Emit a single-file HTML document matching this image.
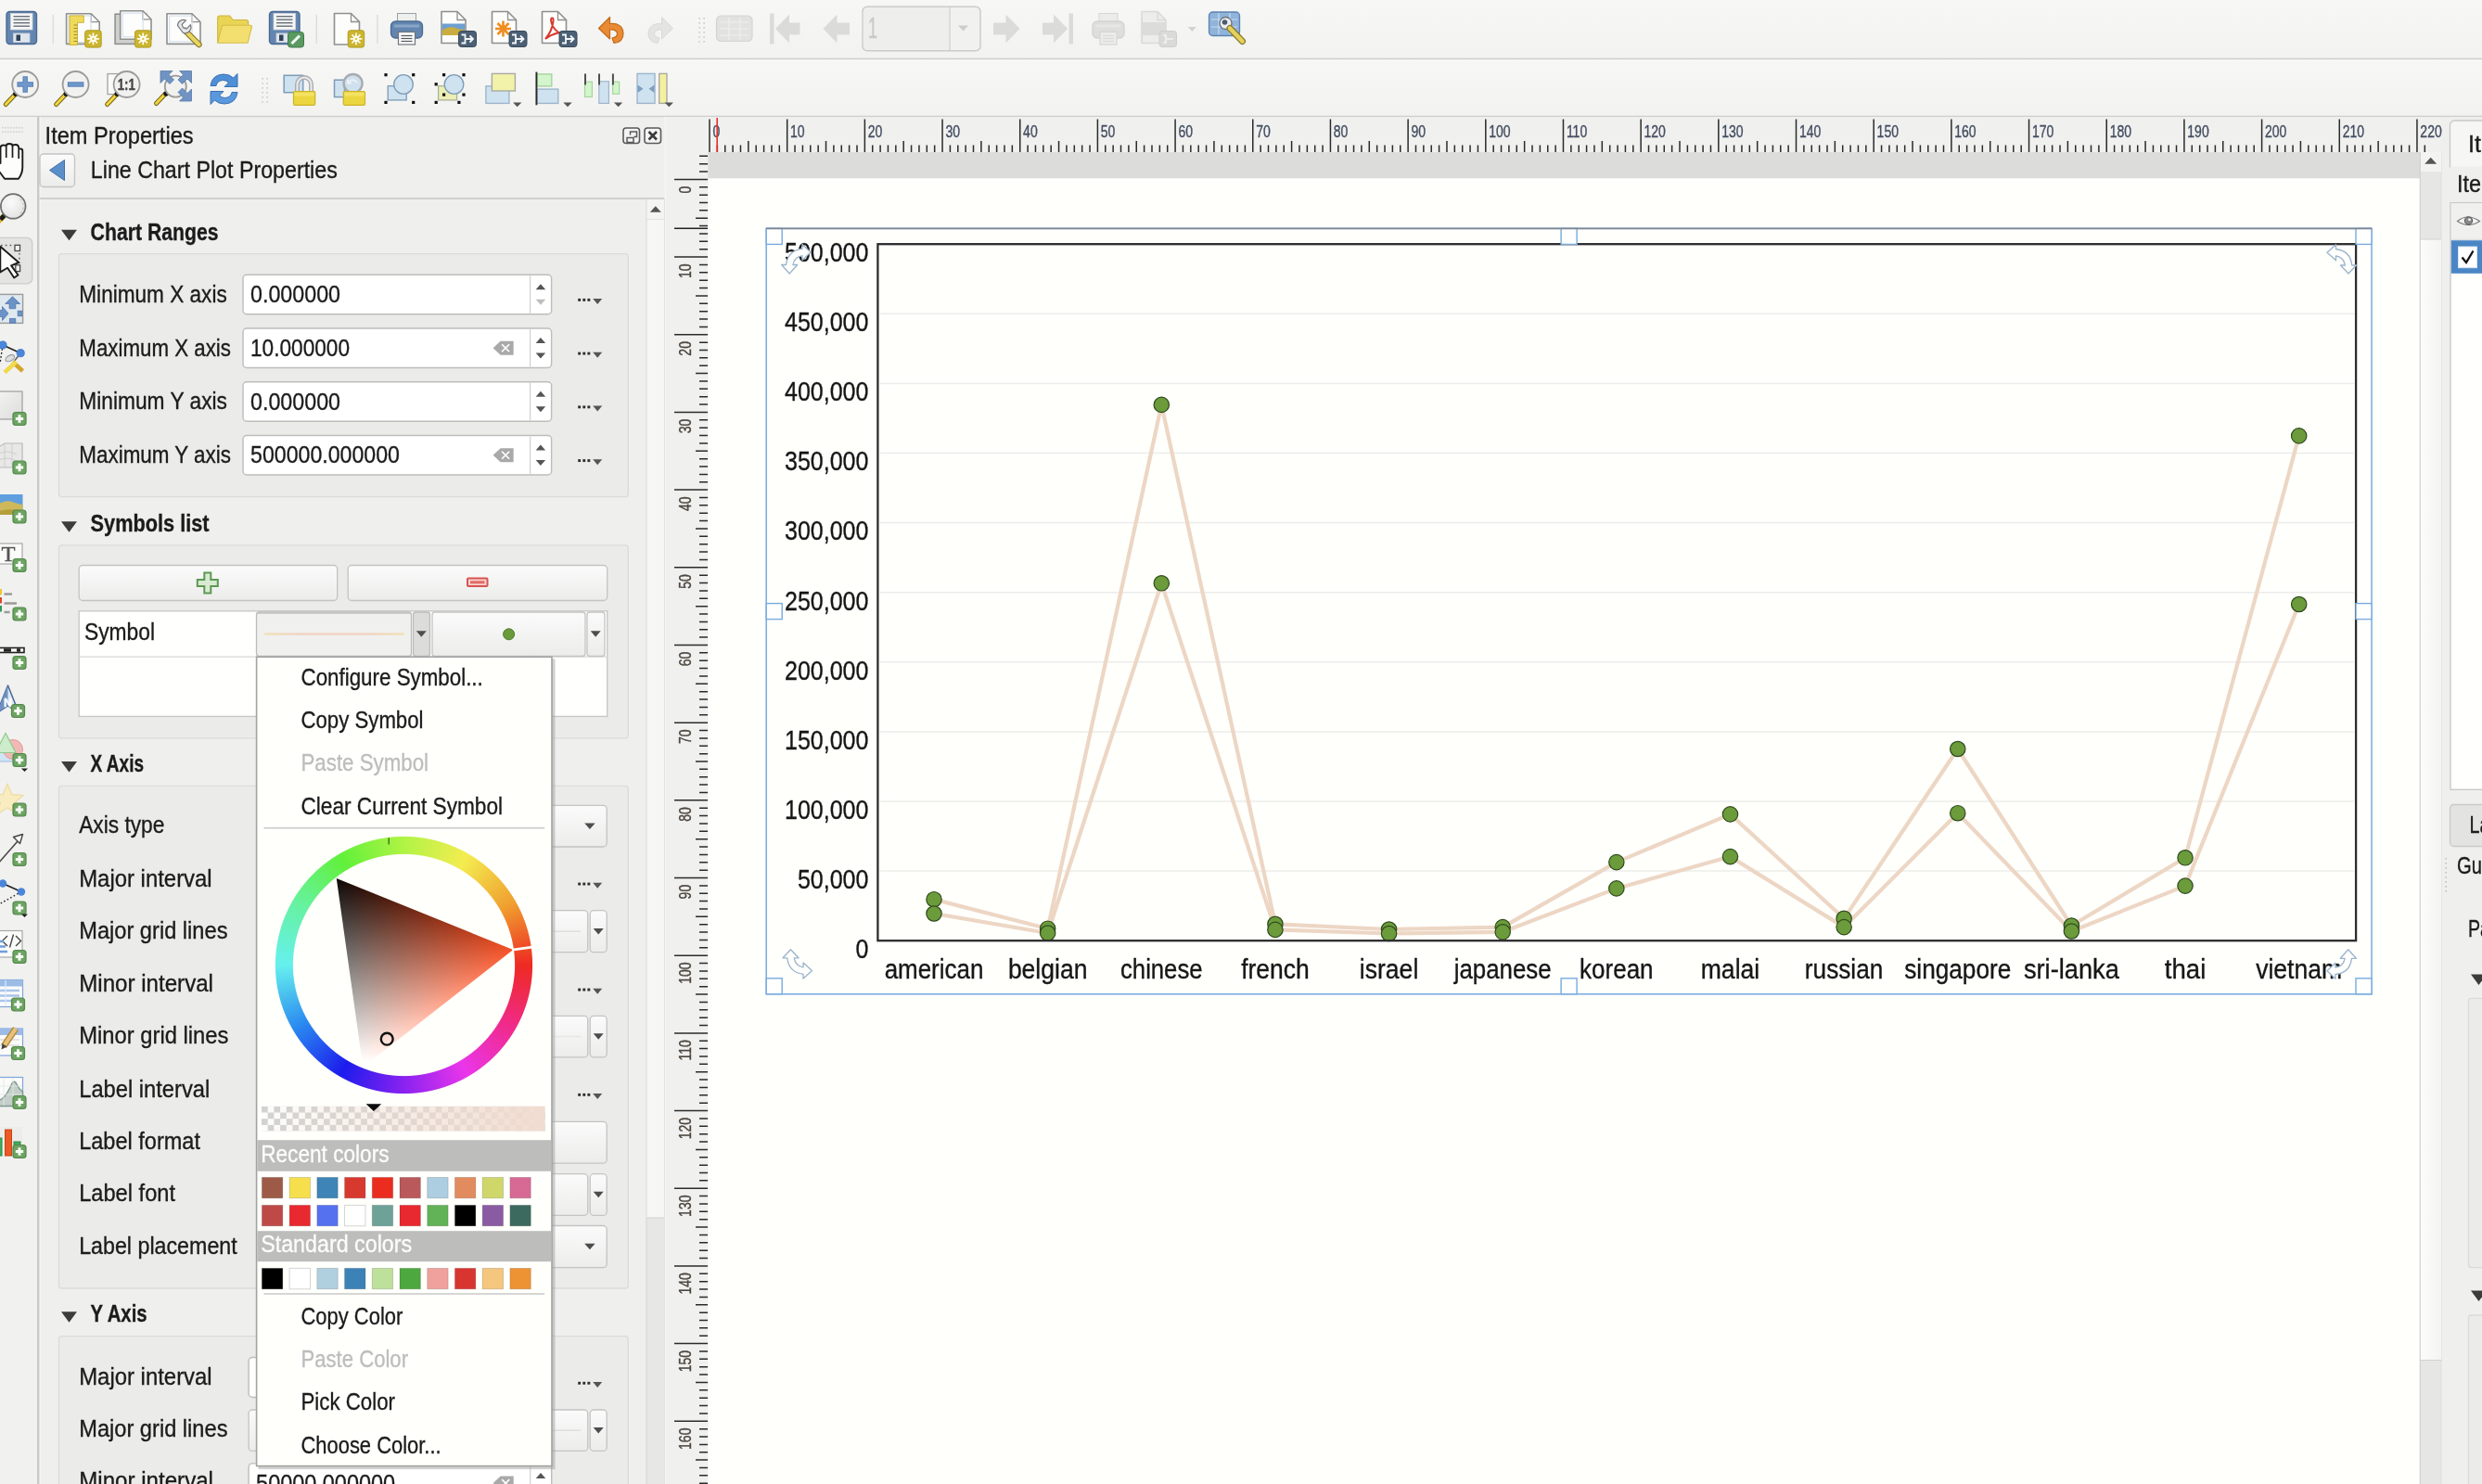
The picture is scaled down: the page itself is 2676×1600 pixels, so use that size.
<!DOCTYPE html>
<html><head><meta charset="utf-8"><title>QGIS Layout</title>
<style>
html,body{margin:0;padding:0;background:#efefee;overflow:hidden}
svg{display:block;font-family:"Liberation Sans",sans-serif;filter:blur(0.55px)}
text{stroke-width:0.35px;paint-order:stroke fill}
</style></head><body>
<svg width="2676" height="1600" viewBox="0 0 2676 1600"><defs><linearGradient id="tb" x1="0" y1="0" x2="0" y2="1"><stop offset="0" stop-color="#f7f7f6"/><stop offset="1" stop-color="#f2f2f1"/></linearGradient><linearGradient id="btn" x1="0" y1="0" x2="0" y2="1"><stop offset="0" stop-color="#fbfbfb"/><stop offset="1" stop-color="#ececeb"/></linearGradient><linearGradient id="lsym" x1="0" y1="0" x2="1" y2="0"><stop offset="0" stop-color="#efe3b4"/><stop offset="0.25" stop-color="#f2d2c2"/><stop offset="0.75" stop-color="#f2d2c2"/><stop offset="1" stop-color="#efe3b4"/></linearGradient><linearGradient id="sbh" x1="0" y1="0" x2="1" y2="0"><stop offset="0" stop-color="#fcfcfb"/><stop offset="1" stop-color="#f4f4f3"/></linearGradient><radialGradient id="lens" cx="0.4" cy="0.35" r="0.7"><stop offset="0" stop-color="#fafafa"/><stop offset="1" stop-color="#e2e2e1"/></radialGradient><linearGradient id="mapg" x1="0" y1="0" x2="1" y2="1"><stop offset="0" stop-color="#f4f4f3"/><stop offset="1" stop-color="#dcdcdb"/></linearGradient><linearGradient id="gh" gradientUnits="userSpaceOnUse" x1="553.25" y1="1023.99" x2="377.08" y2="1048.75"><stop offset="0" stop-color="#ea4a20"/><stop offset="1" stop-color="#ea4a20" stop-opacity="0"/></linearGradient><linearGradient id="gw" gradientUnits="userSpaceOnUse" x1="391.37" y1="1150.46" x2="458.01" y2="985.52"><stop offset="0" stop-color="#fff"/><stop offset="1" stop-color="#fff" stop-opacity="0"/></linearGradient><clipPath id="tric"><path d="M553.25 1023.99L362.78 947.04L391.37 1150.46z"/></clipPath><pattern id="chk" width="13.4" height="13.4" patternUnits="userSpaceOnUse" x="282" y="1192.8"><rect width="13.4" height="13.4" fill="#fdfdfb"/><rect width="6.7" height="6.7" fill="#d2d2d0"/><rect x="6.7" y="6.7" width="6.7" height="6.7" fill="#d2d2d0"/></pattern><linearGradient id="al" x1="0" y1="0" x2="1" y2="0"><stop offset="0" stop-color="#f1dcd0" stop-opacity="0"/><stop offset="1" stop-color="#f1dcd0" stop-opacity="1"/></linearGradient></defs><rect x="0" y="0" width="2676" height="1600" fill="#efefee"/><rect x="0" y="0" width="2676" height="63.5" fill="url(#tb)"/><rect x="0" y="63.5" width="2676" height="62.5" fill="url(#tb)"/><line x1="0" y1="63.5" x2="2676" y2="63.5" stroke="#cbcbca" stroke-width="1.5" /><line x1="0" y1="65" x2="2676" y2="65" stroke="#fafafa" stroke-width="1" /><line x1="0" y1="125.5" x2="2676" y2="125.5" stroke="#cfcfce" stroke-width="1.5" /><rect x="0" y="126" width="40" height="1474" fill="#f1f1f0"/><line x1="41.3" y1="126" x2="41.3" y2="1600" stroke="#c9c9c8" stroke-width="2.6" /><line x1="43.2" y1="126" x2="43.2" y2="1600" stroke="#f6f6f5" stroke-width="1" /><text x="48.6" y="155.2" font-size="26.67" fill="#1b1b1b" stroke="#1b1b1b" textLength="160" lengthAdjust="spacingAndGlyphs">Item Properties</text><rect x="672" y="138" width="17.5" height="16.5" fill="#f4f4f4" rx="3" stroke="#5a5a5a" stroke-width="1.6"/><rect x="695" y="138" width="17.5" height="16.5" fill="#f4f4f4" rx="3" stroke="#5a5a5a" stroke-width="1.6"/><path d="M676 148.5h7v5h-7zM679.5 145.5v-3.5h7v5.5h-3" fill="none" stroke="#5a5a5a" stroke-width="1.5"/><path d="M699.5 142l8.5 8.5M708 142l-8.5 8.5" fill="none" stroke="#3a3a3a" stroke-width="2.6"/><rect x="43" y="166" width="37.5" height="35.5" fill="url(#btn)" rx="4" stroke="#c4c4c3" stroke-width="1.3"/><path d="M53.5 183.5L69.5 172.5V194.5z" fill="#5b8fc9" stroke="#3f6fa8" stroke-width="1"/><text x="97.8" y="191.8" font-size="26.67" fill="#1b1b1b" stroke="#1b1b1b" textLength="266" lengthAdjust="spacingAndGlyphs">Line Chart Plot Properties</text><line x1="42.6" y1="214" x2="716" y2="214" stroke="#c6c6c5" stroke-width="1.4" /><rect x="697" y="215" width="19.5" height="1385" fill="#e7e7e6"/><line x1="697" y1="215" x2="697" y2="1600" stroke="#d4d4d3" stroke-width="1" /><rect x="697.5" y="236" width="18.5" height="1077" fill="#f6f6f5"/><line x1="697.5" y1="236" x2="716" y2="236" stroke="#d0d0cf" stroke-width="1" /><line x1="697.5" y1="1313" x2="716" y2="1313" stroke="#d0d0cf" stroke-width="1" /><rect x="697.5" y="215" width="18.5" height="21" fill="#f4f4f3"/><path d="M700.8 228.75h12l-6 -6.5z" fill="#555"/><line x1="716.5" y1="214" x2="716.5" y2="1600" stroke="#d4d4d3" stroke-width="1" /><path d="M66 247.8h17l-8.5 11.5z" fill="#3c3c3c"/><text x="97.6" y="258.8" font-size="26.67" fill="#1b1b1b" stroke="#1b1b1b" font-weight="bold" textLength="138" lengthAdjust="spacingAndGlyphs">Chart Ranges</text><rect x="63.5" y="273.6" width="613.8" height="262" fill="#ebebea" rx="3" stroke="#dbdbda" stroke-width="1.3"/><text x="85.3" y="325.8" font-size="26.67" fill="#1b1b1b" stroke="#1b1b1b" textLength="159.4" lengthAdjust="spacingAndGlyphs">Minimum X axis</text><rect x="262" y="296.3" width="332.6" height="42.4" fill="#ffffff" rx="4" stroke="#bdbdbc" stroke-width="1.4"/><line x1="571.6" y1="297.3" x2="571.6" y2="337.7" stroke="#d0d0cf" stroke-width="1.2" /><path d="M577.65 312.3h10.5l-5.25 -6z" fill="#555"/><path d="M577.65 322.7h10.5l-5.25 6z" fill="#bdbdbc"/><text x="270" y="326.1" font-size="26.67" fill="#1b1b1b" stroke="#1b1b1b" textLength="97" lengthAdjust="spacingAndGlyphs">0.000000</text><rect x="623.2" y="321.9" width="2.9" height="2.9" fill="#2f2f2f"/><rect x="628.3" y="321.9" width="2.9" height="2.9" fill="#2f2f2f"/><rect x="633.4" y="321.9" width="2.9" height="2.9" fill="#2f2f2f"/><path d="M639.2 322.1h10l-5 6z" fill="#555"/><text x="85.3" y="383.55" font-size="26.67" fill="#1b1b1b" stroke="#1b1b1b" textLength="163.7" lengthAdjust="spacingAndGlyphs">Maximum X axis</text><rect x="262" y="354.05" width="332.6" height="42.4" fill="#ffffff" rx="4" stroke="#bdbdbc" stroke-width="1.4"/><line x1="571.6" y1="355.05" x2="571.6" y2="395.45" stroke="#d0d0cf" stroke-width="1.2" /><path d="M577.65 370.05h10.5l-5.25 -6z" fill="#555"/><path d="M577.65 380.45h10.5l-5.25 6z" fill="#555"/><text x="270" y="383.85" font-size="26.67" fill="#1b1b1b" stroke="#1b1b1b" textLength="107" lengthAdjust="spacingAndGlyphs">10.000000</text><path d="M531.6 375.25l8 -7.5h14v15h-14z" fill="#a9a9a9"/><path d="M541.1 371.25l8 8M549.1 371.25l-8 8" fill="none" stroke="#ffffff" stroke-width="1.7"/><rect x="623.2" y="379.65" width="2.9" height="2.9" fill="#2f2f2f"/><rect x="628.3" y="379.65" width="2.9" height="2.9" fill="#2f2f2f"/><rect x="633.4" y="379.65" width="2.9" height="2.9" fill="#2f2f2f"/><path d="M639.2 379.85h10l-5 6z" fill="#555"/><text x="85.3" y="441.3" font-size="26.67" fill="#1b1b1b" stroke="#1b1b1b" textLength="159.7" lengthAdjust="spacingAndGlyphs">Minimum Y axis</text><rect x="262" y="411.8" width="332.6" height="42.4" fill="#ffffff" rx="4" stroke="#bdbdbc" stroke-width="1.4"/><line x1="571.6" y1="412.8" x2="571.6" y2="453.2" stroke="#d0d0cf" stroke-width="1.2" /><path d="M577.65 427.8h10.5l-5.25 -6z" fill="#555"/><path d="M577.65 438.2h10.5l-5.25 6z" fill="#555"/><text x="270" y="441.6" font-size="26.67" fill="#1b1b1b" stroke="#1b1b1b" textLength="97" lengthAdjust="spacingAndGlyphs">0.000000</text><rect x="623.2" y="437.4" width="2.9" height="2.9" fill="#2f2f2f"/><rect x="628.3" y="437.4" width="2.9" height="2.9" fill="#2f2f2f"/><rect x="633.4" y="437.4" width="2.9" height="2.9" fill="#2f2f2f"/><path d="M639.2 437.6h10l-5 6z" fill="#555"/><text x="85.3" y="499.05" font-size="26.67" fill="#1b1b1b" stroke="#1b1b1b" textLength="163.7" lengthAdjust="spacingAndGlyphs">Maximum Y axis</text><rect x="262" y="469.55" width="332.6" height="42.4" fill="#ffffff" rx="4" stroke="#bdbdbc" stroke-width="1.4"/><line x1="571.6" y1="470.55" x2="571.6" y2="510.95" stroke="#d0d0cf" stroke-width="1.2" /><path d="M577.65 485.55h10.5l-5.25 -6z" fill="#555"/><path d="M577.65 495.95h10.5l-5.25 6z" fill="#555"/><text x="270" y="499.35" font-size="26.67" fill="#1b1b1b" stroke="#1b1b1b" textLength="161" lengthAdjust="spacingAndGlyphs">500000.000000</text><path d="M531.6 490.75l8 -7.5h14v15h-14z" fill="#a9a9a9"/><path d="M541.1 486.75l8 8M549.1 486.75l-8 8" fill="none" stroke="#ffffff" stroke-width="1.7"/><rect x="623.2" y="495.15" width="2.9" height="2.9" fill="#2f2f2f"/><rect x="628.3" y="495.15" width="2.9" height="2.9" fill="#2f2f2f"/><rect x="633.4" y="495.15" width="2.9" height="2.9" fill="#2f2f2f"/><path d="M639.2 495.35h10l-5 6z" fill="#555"/><path d="M66 562.2h17l-8.5 11.5z" fill="#3c3c3c"/><text x="97.6" y="573.2" font-size="26.67" fill="#1b1b1b" stroke="#1b1b1b" font-weight="bold" textLength="128" lengthAdjust="spacingAndGlyphs">Symbols list</text><rect x="63.5" y="587.8" width="613.8" height="208" fill="#ebebea" rx="3" stroke="#dbdbda" stroke-width="1.3"/><rect x="85.2" y="609.5" width="278.5" height="38" fill="url(#btn)" rx="4" stroke="#c4c4c3" stroke-width="1.3"/><rect x="375.2" y="609.5" width="279.5" height="38" fill="url(#btn)" rx="4" stroke="#c4c4c3" stroke-width="1.3"/><path d="M220.3 617.5h7v7.5h7.5v7h-7.5v7.5h-7v-7.5h-7.5v-7h7.5z" fill="#d9ead3" stroke="#5c9a52" stroke-width="2"/><rect x="504" y="623.5" width="21.5" height="8.5" fill="#f7d4d2" rx="1" stroke="#d9534f" stroke-width="2"/><rect x="507" y="626.3" width="15.5" height="3" fill="#e06b66"/><rect x="85.2" y="658.8" width="569.5" height="113.6" fill="#fffffd" stroke="#c6c6c5" stroke-width="1.3"/><line x1="85.2" y1="708.2" x2="654.7" y2="708.2" stroke="#d9d9d8" stroke-width="1.2" /><text x="91" y="690.2" font-size="26.67" fill="#1b1b1b" stroke="#1b1b1b" textLength="76" lengthAdjust="spacingAndGlyphs">Symbol</text><rect x="276.5" y="660" width="167" height="47.5" fill="#f0f0ef" rx="3" stroke="#bcbcbb" stroke-width="1.3"/><line x1="277" y1="661" x2="443" y2="661" stroke="#c2c2c1" stroke-width="1.6" /><rect x="445.5" y="660" width="18" height="47.5" fill="#dcdcdb" rx="3" stroke="#bcbcbb" stroke-width="1.3"/><rect x="285" y="682.4" width="151" height="2.4" fill="url(#lsym)"/><path d="M448.8 680.25h11l-5.5 6.5z" fill="#4d4d4d"/><rect x="466" y="660" width="165" height="47.5" fill="url(#btn)" rx="3" stroke="#c4c4c3" stroke-width="1.3"/><rect x="633" y="660" width="19" height="47.5" fill="url(#btn)" rx="3" stroke="#c4c4c3" stroke-width="1.3"/><circle cx="548.6" cy="683.8" r="6" fill="#6a9a3a" stroke="#4d7a2a" stroke-width="1"/><path d="M636.7 680.25h11l-5.5 6.5z" fill="#4d4d4d"/><path d="M66 821h17l-8.5 11.5z" fill="#3c3c3c"/><text x="97.6" y="832" font-size="26.67" fill="#1b1b1b" stroke="#1b1b1b" font-weight="bold" textLength="57.5" lengthAdjust="spacingAndGlyphs">X Axis</text><rect x="63.5" y="847.3" width="613.8" height="541.7" fill="#ebebea" rx="3" stroke="#dbdbda" stroke-width="1.3"/><text x="85.2" y="897.8" font-size="26.67" fill="#1b1b1b" stroke="#1b1b1b" textLength="92.1" lengthAdjust="spacingAndGlyphs">Axis type</text><text x="85.2" y="955.5" font-size="26.67" fill="#1b1b1b" stroke="#1b1b1b" textLength="143.5" lengthAdjust="spacingAndGlyphs">Major interval</text><text x="85.2" y="1011.9" font-size="26.67" fill="#1b1b1b" stroke="#1b1b1b" textLength="160.3" lengthAdjust="spacingAndGlyphs">Major grid lines</text><text x="85.2" y="1069.2" font-size="26.67" fill="#1b1b1b" stroke="#1b1b1b" textLength="144.8" lengthAdjust="spacingAndGlyphs">Minor interval</text><text x="85.2" y="1125" font-size="26.67" fill="#1b1b1b" stroke="#1b1b1b" textLength="161.2" lengthAdjust="spacingAndGlyphs">Minor grid lines</text><text x="85.2" y="1183" font-size="26.67" fill="#1b1b1b" stroke="#1b1b1b" textLength="141.1" lengthAdjust="spacingAndGlyphs">Label interval</text><text x="85.2" y="1238.8" font-size="26.67" fill="#1b1b1b" stroke="#1b1b1b" textLength="130.8" lengthAdjust="spacingAndGlyphs">Label format</text><text x="85.2" y="1294.9" font-size="26.67" fill="#1b1b1b" stroke="#1b1b1b" textLength="103.8" lengthAdjust="spacingAndGlyphs">Label font</text><text x="85.2" y="1351.5" font-size="26.67" fill="#1b1b1b" stroke="#1b1b1b" textLength="170.5" lengthAdjust="spacingAndGlyphs">Label placement</text><rect x="278.5" y="868.3" width="375.7" height="44.7" fill="url(#btn)" rx="4" stroke="#c4c4c3" stroke-width="1.3"/><path d="M630.15 887.4h11.5l-5.75 6.5z" fill="#4d4d4d"/><rect x="623.2" y="951.6" width="2.9" height="2.9" fill="#2f2f2f"/><rect x="628.3" y="951.6" width="2.9" height="2.9" fill="#2f2f2f"/><rect x="633.4" y="951.6" width="2.9" height="2.9" fill="#2f2f2f"/><path d="M639.2 951.8h10l-5 6z" fill="#555"/><rect x="278.5" y="981.7" width="355.2" height="45" fill="url(#btn)" rx="4" stroke="#c4c4c3" stroke-width="1.3"/><rect x="636.2" y="981.7" width="18" height="45" fill="url(#btn)" rx="4" stroke="#c4c4c3" stroke-width="1.3"/><path d="M639.7 1000.95h11l-5.5 6.5z" fill="#4d4d4d"/><line x1="286.5" y1="1004.2" x2="626.2" y2="1004.2" stroke="#dededd" stroke-width="1.5" /><rect x="623.2" y="1065.6" width="2.9" height="2.9" fill="#2f2f2f"/><rect x="628.3" y="1065.6" width="2.9" height="2.9" fill="#2f2f2f"/><rect x="633.4" y="1065.6" width="2.9" height="2.9" fill="#2f2f2f"/><path d="M639.2 1065.8h10l-5 6z" fill="#555"/><rect x="278.5" y="1095.3" width="355.2" height="44.6" fill="url(#btn)" rx="4" stroke="#c4c4c3" stroke-width="1.3"/><rect x="636.2" y="1095.3" width="18" height="44.6" fill="url(#btn)" rx="4" stroke="#c4c4c3" stroke-width="1.3"/><path d="M639.7 1114.35h11l-5.5 6.5z" fill="#4d4d4d"/><line x1="286.5" y1="1117.6" x2="626.2" y2="1117.6" stroke="#e6e6e5" stroke-width="1.5" /><rect x="623.2" y="1178.9" width="2.9" height="2.9" fill="#2f2f2f"/><rect x="628.3" y="1178.9" width="2.9" height="2.9" fill="#2f2f2f"/><rect x="633.4" y="1178.9" width="2.9" height="2.9" fill="#2f2f2f"/><path d="M639.2 1179.1h10l-5 6z" fill="#555"/><rect x="278.5" y="1209.4" width="375.7" height="44.8" fill="url(#btn)" rx="4" stroke="#c4c4c3" stroke-width="1.3"/><rect x="278.5" y="1265.7" width="355.2" height="44.7" fill="url(#btn)" rx="4" stroke="#c4c4c3" stroke-width="1.3"/><rect x="636.2" y="1265.7" width="18" height="44.7" fill="url(#btn)" rx="4" stroke="#c4c4c3" stroke-width="1.3"/><path d="M639.7 1284.8h11l-5.5 6.5z" fill="#4d4d4d"/><rect x="278.5" y="1321.5" width="375.7" height="45.2" fill="url(#btn)" rx="4" stroke="#c4c4c3" stroke-width="1.3"/><path d="M630.15 1340.85h11.5l-5.75 6.5z" fill="#4d4d4d"/><path d="M66 1414.2h17l-8.5 11.5z" fill="#3c3c3c"/><text x="97.6" y="1425.2" font-size="26.67" fill="#1b1b1b" stroke="#1b1b1b" font-weight="bold" textLength="61" lengthAdjust="spacingAndGlyphs">Y Axis</text><rect x="63.5" y="1440.6" width="613.8" height="169.4" fill="#ebebea" rx="3" stroke="#dbdbda" stroke-width="1.3"/><text x="85.2" y="1493" font-size="26.67" fill="#1b1b1b" stroke="#1b1b1b" textLength="143.5" lengthAdjust="spacingAndGlyphs">Major interval</text><text x="85.2" y="1549" font-size="26.67" fill="#1b1b1b" stroke="#1b1b1b" textLength="160.3" lengthAdjust="spacingAndGlyphs">Major grid lines</text><text x="85.2" y="1604.5" font-size="26.67" fill="#1b1b1b" stroke="#1b1b1b" textLength="144.8" lengthAdjust="spacingAndGlyphs">Minor interval</text><rect x="268.1" y="1463.5" width="326" height="43" fill="#fff" rx="4" stroke="#bdbdbc" stroke-width="1.4"/><rect x="623.2" y="1489.8" width="2.9" height="2.9" fill="#2f2f2f"/><rect x="628.3" y="1489.8" width="2.9" height="2.9" fill="#2f2f2f"/><rect x="633.4" y="1489.8" width="2.9" height="2.9" fill="#2f2f2f"/><path d="M639.2 1490h10l-5 6z" fill="#555"/><rect x="268.1" y="1520" width="365.6" height="44.4" fill="url(#btn)" rx="4" stroke="#c4c4c3" stroke-width="1.3"/><rect x="636.2" y="1520" width="18" height="44.4" fill="url(#btn)" rx="4" stroke="#c4c4c3" stroke-width="1.3"/><path d="M639.7 1538.95h11l-5.5 6.5z" fill="#4d4d4d"/><line x1="276.1" y1="1542.2" x2="626.2" y2="1542.2" stroke="#dededd" stroke-width="1.5" /><rect x="268.1" y="1577.9" width="326.6" height="42.4" fill="#ffffff" rx="4" stroke="#bdbdbc" stroke-width="1.4"/><line x1="571.7" y1="1578.9" x2="571.7" y2="1619.3" stroke="#d0d0cf" stroke-width="1.2" /><path d="M577.75 1593.9h10.5l-5.25 -6z" fill="#555"/><path d="M577.75 1604.3h10.5l-5.25 6z" fill="#555"/><text x="276.1" y="1607.7" font-size="26.67" fill="#1b1b1b" stroke="#1b1b1b" textLength="150" lengthAdjust="spacingAndGlyphs">50000.000000</text><path d="M531.7 1599.1l8 -7.5h14v15h-14z" fill="#a9a9a9"/><path d="M541.2 1595.1l8 8M549.2 1595.1l-8 8" fill="none" stroke="#ffffff" stroke-width="1.7"/><rect x="717" y="126.3" width="1915" height="38" fill="#f0f0ef"/><rect x="717" y="126.3" width="46.3" height="1474" fill="#f0f0ef"/><line x1="717.3" y1="126" x2="717.3" y2="1600" stroke="#f6f6f5" stroke-width="1.5" /><path d="M765 128.4V164M773.37 156.5V164M781.74 156.5V164M790.1 156.5V164M798.47 156.5V164M806.84 152V164M815.21 156.5V164M823.58 156.5V164M831.94 156.5V164M840.31 156.5V164M848.68 128.4V164M857.05 156.5V164M865.42 156.5V164M873.78 156.5V164M882.15 156.5V164M890.52 152V164M898.89 156.5V164M907.26 156.5V164M915.62 156.5V164M923.99 156.5V164M932.36 128.4V164M940.73 156.5V164M949.1 156.5V164M957.46 156.5V164M965.83 156.5V164M974.2 152V164M982.57 156.5V164M990.94 156.5V164M999.3 156.5V164M1007.67 156.5V164M1016.04 128.4V164M1024.41 156.5V164M1032.78 156.5V164M1041.14 156.5V164M1049.51 156.5V164M1057.88 152V164M1066.25 156.5V164M1074.62 156.5V164M1082.98 156.5V164M1091.35 156.5V164M1099.72 128.4V164M1108.09 156.5V164M1116.46 156.5V164M1124.82 156.5V164M1133.19 156.5V164M1141.56 152V164M1149.93 156.5V164M1158.3 156.5V164M1166.66 156.5V164M1175.03 156.5V164M1183.4 128.4V164M1191.77 156.5V164M1200.14 156.5V164M1208.5 156.5V164M1216.87 156.5V164M1225.24 152V164M1233.61 156.5V164M1241.98 156.5V164M1250.34 156.5V164M1258.71 156.5V164M1267.08 128.4V164M1275.45 156.5V164M1283.82 156.5V164M1292.18 156.5V164M1300.55 156.5V164M1308.92 152V164M1317.29 156.5V164M1325.66 156.5V164M1334.02 156.5V164M1342.39 156.5V164M1350.76 128.4V164M1359.13 156.5V164M1367.5 156.5V164M1375.86 156.5V164M1384.23 156.5V164M1392.6 152V164M1400.97 156.5V164M1409.34 156.5V164M1417.7 156.5V164M1426.07 156.5V164M1434.44 128.4V164M1442.81 156.5V164M1451.18 156.5V164M1459.54 156.5V164M1467.91 156.5V164M1476.28 152V164M1484.65 156.5V164M1493.02 156.5V164M1501.38 156.5V164M1509.75 156.5V164M1518.12 128.4V164M1526.49 156.5V164M1534.86 156.5V164M1543.22 156.5V164M1551.59 156.5V164M1559.96 152V164M1568.33 156.5V164M1576.7 156.5V164M1585.06 156.5V164M1593.43 156.5V164M1601.8 128.4V164M1610.17 156.5V164M1618.54 156.5V164M1626.9 156.5V164M1635.27 156.5V164M1643.64 152V164M1652.01 156.5V164M1660.38 156.5V164M1668.74 156.5V164M1677.11 156.5V164M1685.48 128.4V164M1693.85 156.5V164M1702.22 156.5V164M1710.58 156.5V164M1718.95 156.5V164M1727.32 152V164M1735.69 156.5V164M1744.06 156.5V164M1752.42 156.5V164M1760.79 156.5V164M1769.16 128.4V164M1777.53 156.5V164M1785.9 156.5V164M1794.26 156.5V164M1802.63 156.5V164M1811 152V164M1819.37 156.5V164M1827.74 156.5V164M1836.1 156.5V164M1844.47 156.5V164M1852.84 128.4V164M1861.21 156.5V164M1869.58 156.5V164M1877.94 156.5V164M1886.31 156.5V164M1894.68 152V164M1903.05 156.5V164M1911.42 156.5V164M1919.78 156.5V164M1928.15 156.5V164M1936.52 128.4V164M1944.89 156.5V164M1953.26 156.5V164M1961.62 156.5V164M1969.99 156.5V164M1978.36 152V164M1986.73 156.5V164M1995.1 156.5V164M2003.46 156.5V164M2011.83 156.5V164M2020.2 128.4V164M2028.57 156.5V164M2036.94 156.5V164M2045.3 156.5V164M2053.67 156.5V164M2062.04 152V164M2070.41 156.5V164M2078.78 156.5V164M2087.14 156.5V164M2095.51 156.5V164M2103.88 128.4V164M2112.25 156.5V164M2120.62 156.5V164M2128.98 156.5V164M2137.35 156.5V164M2145.72 152V164M2154.09 156.5V164M2162.46 156.5V164M2170.82 156.5V164M2179.19 156.5V164M2187.56 128.4V164M2195.93 156.5V164M2204.3 156.5V164M2212.66 156.5V164M2221.03 156.5V164M2229.4 152V164M2237.77 156.5V164M2246.14 156.5V164M2254.5 156.5V164M2262.87 156.5V164M2271.24 128.4V164M2279.61 156.5V164M2287.98 156.5V164M2296.34 156.5V164M2304.71 156.5V164M2313.08 152V164M2321.45 156.5V164M2329.82 156.5V164M2338.18 156.5V164M2346.55 156.5V164M2354.92 128.4V164M2363.29 156.5V164M2371.66 156.5V164M2380.02 156.5V164M2388.39 156.5V164M2396.76 152V164M2405.13 156.5V164M2413.5 156.5V164M2421.86 156.5V164M2430.23 156.5V164M2438.6 128.4V164M2446.97 156.5V164M2455.34 156.5V164M2463.7 156.5V164M2472.07 156.5V164M2480.44 152V164M2488.81 156.5V164M2497.18 156.5V164M2505.54 156.5V164M2513.91 156.5V164M2522.28 128.4V164M2530.65 156.5V164M2539.02 156.5V164M2547.38 156.5V164M2555.75 156.5V164M2564.12 152V164M2572.49 156.5V164M2580.86 156.5V164M2589.22 156.5V164M2597.59 156.5V164M2605.96 128.4V164M2614.33 156.5V164" fill="none" stroke="#2b2b2b" stroke-width="1.5"/><text x="768.4" y="147.7" font-size="17.5" fill="#434d60" stroke="#434d60" textLength="7.79" lengthAdjust="spacingAndGlyphs">0</text><text x="852.08" y="147.7" font-size="17.5" fill="#434d60" stroke="#434d60" textLength="15.57" lengthAdjust="spacingAndGlyphs">10</text><text x="935.76" y="147.7" font-size="17.5" fill="#434d60" stroke="#434d60" textLength="15.57" lengthAdjust="spacingAndGlyphs">20</text><text x="1019.44" y="147.7" font-size="17.5" fill="#434d60" stroke="#434d60" textLength="15.57" lengthAdjust="spacingAndGlyphs">30</text><text x="1103.12" y="147.7" font-size="17.5" fill="#434d60" stroke="#434d60" textLength="15.57" lengthAdjust="spacingAndGlyphs">40</text><text x="1186.8" y="147.7" font-size="17.5" fill="#434d60" stroke="#434d60" textLength="15.57" lengthAdjust="spacingAndGlyphs">50</text><text x="1270.48" y="147.7" font-size="17.5" fill="#434d60" stroke="#434d60" textLength="15.57" lengthAdjust="spacingAndGlyphs">60</text><text x="1354.16" y="147.7" font-size="17.5" fill="#434d60" stroke="#434d60" textLength="15.57" lengthAdjust="spacingAndGlyphs">70</text><text x="1437.84" y="147.7" font-size="17.5" fill="#434d60" stroke="#434d60" textLength="15.57" lengthAdjust="spacingAndGlyphs">80</text><text x="1521.52" y="147.7" font-size="17.5" fill="#434d60" stroke="#434d60" textLength="15.57" lengthAdjust="spacingAndGlyphs">90</text><text x="1605.2" y="147.7" font-size="17.5" fill="#434d60" stroke="#434d60" textLength="23.36" lengthAdjust="spacingAndGlyphs">100</text><text x="1688.88" y="147.7" font-size="17.5" fill="#434d60" stroke="#434d60" textLength="22.32" lengthAdjust="spacingAndGlyphs">110</text><text x="1772.56" y="147.7" font-size="17.5" fill="#434d60" stroke="#434d60" textLength="23.36" lengthAdjust="spacingAndGlyphs">120</text><text x="1856.24" y="147.7" font-size="17.5" fill="#434d60" stroke="#434d60" textLength="23.36" lengthAdjust="spacingAndGlyphs">130</text><text x="1939.92" y="147.7" font-size="17.5" fill="#434d60" stroke="#434d60" textLength="23.36" lengthAdjust="spacingAndGlyphs">140</text><text x="2023.6" y="147.7" font-size="17.5" fill="#434d60" stroke="#434d60" textLength="23.36" lengthAdjust="spacingAndGlyphs">150</text><text x="2107.28" y="147.7" font-size="17.5" fill="#434d60" stroke="#434d60" textLength="23.36" lengthAdjust="spacingAndGlyphs">160</text><text x="2190.96" y="147.7" font-size="17.5" fill="#434d60" stroke="#434d60" textLength="23.36" lengthAdjust="spacingAndGlyphs">170</text><text x="2274.64" y="147.7" font-size="17.5" fill="#434d60" stroke="#434d60" textLength="23.36" lengthAdjust="spacingAndGlyphs">180</text><text x="2358.32" y="147.7" font-size="17.5" fill="#434d60" stroke="#434d60" textLength="23.36" lengthAdjust="spacingAndGlyphs">190</text><text x="2442" y="147.7" font-size="17.5" fill="#434d60" stroke="#434d60" textLength="23.36" lengthAdjust="spacingAndGlyphs">200</text><text x="2525.68" y="147.7" font-size="17.5" fill="#434d60" stroke="#434d60" textLength="23.36" lengthAdjust="spacingAndGlyphs">210</text><text x="2609.36" y="147.7" font-size="17.5" fill="#434d60" stroke="#434d60" textLength="23.36" lengthAdjust="spacingAndGlyphs">220</text><line x1="773.2" y1="127" x2="773.2" y2="164" stroke="#e8302a" stroke-width="1.6" /><path d="M754 168.3H763M754 176.66H763M754 185.03H763M727 193.4H763M754 201.77H763M754 210.14H763M754 218.5H763M754 226.87H763M750 235.24H763M754 243.61H763M754 251.98H763M754 260.34H763M754 268.71H763M727 277.08H763M754 285.45H763M754 293.82H763M754 302.18H763M754 310.55H763M750 318.92H763M754 327.29H763M754 335.66H763M754 344.02H763M754 352.39H763M727 360.76H763M754 369.13H763M754 377.5H763M754 385.86H763M754 394.23H763M750 402.6H763M754 410.97H763M754 419.34H763M754 427.7H763M754 436.07H763M727 444.44H763M754 452.81H763M754 461.18H763M754 469.54H763M754 477.91H763M750 486.28H763M754 494.65H763M754 503.02H763M754 511.38H763M754 519.75H763M727 528.12H763M754 536.49H763M754 544.86H763M754 553.22H763M754 561.59H763M750 569.96H763M754 578.33H763M754 586.7H763M754 595.06H763M754 603.43H763M727 611.8H763M754 620.17H763M754 628.54H763M754 636.9H763M754 645.27H763M750 653.64H763M754 662.01H763M754 670.38H763M754 678.74H763M754 687.11H763M727 695.48H763M754 703.85H763M754 712.22H763M754 720.58H763M754 728.95H763M750 737.32H763M754 745.69H763M754 754.06H763M754 762.42H763M754 770.79H763M727 779.16H763M754 787.53H763M754 795.9H763M754 804.26H763M754 812.63H763M750 821H763M754 829.37H763M754 837.74H763M754 846.1H763M754 854.47H763M727 862.84H763M754 871.21H763M754 879.58H763M754 887.94H763M754 896.31H763M750 904.68H763M754 913.05H763M754 921.42H763M754 929.78H763M754 938.15H763M727 946.52H763M754 954.89H763M754 963.26H763M754 971.62H763M754 979.99H763M750 988.36H763M754 996.73H763M754 1005.1H763M754 1013.46H763M754 1021.83H763M727 1030.2H763M754 1038.57H763M754 1046.94H763M754 1055.3H763M754 1063.67H763M750 1072.04H763M754 1080.41H763M754 1088.78H763M754 1097.14H763M754 1105.51H763M727 1113.88H763M754 1122.25H763M754 1130.62H763M754 1138.98H763M754 1147.35H763M750 1155.72H763M754 1164.09H763M754 1172.46H763M754 1180.82H763M754 1189.19H763M727 1197.56H763M754 1205.93H763M754 1214.3H763M754 1222.66H763M754 1231.03H763M750 1239.4H763M754 1247.77H763M754 1256.14H763M754 1264.5H763M754 1272.87H763M727 1281.24H763M754 1289.61H763M754 1297.98H763M754 1306.34H763M754 1314.71H763M750 1323.08H763M754 1331.45H763M754 1339.82H763M754 1348.18H763M754 1356.55H763M727 1364.92H763M754 1373.29H763M754 1381.66H763M754 1390.02H763M754 1398.39H763M750 1406.76H763M754 1415.13H763M754 1423.5H763M754 1431.86H763M754 1440.23H763M727 1448.6H763M754 1456.97H763M754 1465.34H763M754 1473.7H763M754 1482.07H763M750 1490.44H763M754 1498.81H763M754 1507.18H763M754 1515.54H763M754 1523.91H763M727 1532.28H763M754 1540.65H763M754 1549.02H763M754 1557.38H763M754 1565.75H763M750 1574.12H763M754 1582.49H763M754 1590.86H763M754 1599.22H763" fill="none" stroke="#2b2b2b" stroke-width="1.5"/><g transform="translate(745.2 208.49) rotate(-90)"><text x="0" y="0" font-size="17.5" fill="#4c463e" stroke="#4c463e" textLength="7.79" lengthAdjust="spacingAndGlyphs">0</text></g><g transform="translate(745.2 299.95) rotate(-90)"><text x="0" y="0" font-size="17.5" fill="#4c463e" stroke="#4c463e" textLength="15.57" lengthAdjust="spacingAndGlyphs">10</text></g><g transform="translate(745.2 383.63) rotate(-90)"><text x="0" y="0" font-size="17.5" fill="#4c463e" stroke="#4c463e" textLength="15.57" lengthAdjust="spacingAndGlyphs">20</text></g><g transform="translate(745.2 467.31) rotate(-90)"><text x="0" y="0" font-size="17.5" fill="#4c463e" stroke="#4c463e" textLength="15.57" lengthAdjust="spacingAndGlyphs">30</text></g><g transform="translate(745.2 550.99) rotate(-90)"><text x="0" y="0" font-size="17.5" fill="#4c463e" stroke="#4c463e" textLength="15.57" lengthAdjust="spacingAndGlyphs">40</text></g><g transform="translate(745.2 634.67) rotate(-90)"><text x="0" y="0" font-size="17.5" fill="#4c463e" stroke="#4c463e" textLength="15.57" lengthAdjust="spacingAndGlyphs">50</text></g><g transform="translate(745.2 718.35) rotate(-90)"><text x="0" y="0" font-size="17.5" fill="#4c463e" stroke="#4c463e" textLength="15.57" lengthAdjust="spacingAndGlyphs">60</text></g><g transform="translate(745.2 802.03) rotate(-90)"><text x="0" y="0" font-size="17.5" fill="#4c463e" stroke="#4c463e" textLength="15.57" lengthAdjust="spacingAndGlyphs">70</text></g><g transform="translate(745.2 885.71) rotate(-90)"><text x="0" y="0" font-size="17.5" fill="#4c463e" stroke="#4c463e" textLength="15.57" lengthAdjust="spacingAndGlyphs">80</text></g><g transform="translate(745.2 969.39) rotate(-90)"><text x="0" y="0" font-size="17.5" fill="#4c463e" stroke="#4c463e" textLength="15.57" lengthAdjust="spacingAndGlyphs">90</text></g><g transform="translate(745.2 1060.86) rotate(-90)"><text x="0" y="0" font-size="17.5" fill="#4c463e" stroke="#4c463e" textLength="23.36" lengthAdjust="spacingAndGlyphs">100</text></g><g transform="translate(745.2 1143.5) rotate(-90)"><text x="0" y="0" font-size="17.5" fill="#4c463e" stroke="#4c463e" textLength="22.32" lengthAdjust="spacingAndGlyphs">110</text></g><g transform="translate(745.2 1228.22) rotate(-90)"><text x="0" y="0" font-size="17.5" fill="#4c463e" stroke="#4c463e" textLength="23.36" lengthAdjust="spacingAndGlyphs">120</text></g><g transform="translate(745.2 1311.9) rotate(-90)"><text x="0" y="0" font-size="17.5" fill="#4c463e" stroke="#4c463e" textLength="23.36" lengthAdjust="spacingAndGlyphs">130</text></g><g transform="translate(745.2 1395.58) rotate(-90)"><text x="0" y="0" font-size="17.5" fill="#4c463e" stroke="#4c463e" textLength="23.36" lengthAdjust="spacingAndGlyphs">140</text></g><g transform="translate(745.2 1479.26) rotate(-90)"><text x="0" y="0" font-size="17.5" fill="#4c463e" stroke="#4c463e" textLength="23.36" lengthAdjust="spacingAndGlyphs">150</text></g><g transform="translate(745.2 1562.94) rotate(-90)"><text x="0" y="0" font-size="17.5" fill="#4c463e" stroke="#4c463e" textLength="23.36" lengthAdjust="spacingAndGlyphs">160</text></g><g transform="translate(745.2 1646.62) rotate(-90)"><text x="0" y="0" font-size="17.5" fill="#4c463e" stroke="#4c463e" textLength="23.36" lengthAdjust="spacingAndGlyphs">170</text></g><line x1="727" y1="246.3" x2="763" y2="246.3" stroke="#222" stroke-width="1.6" /><rect x="763.3" y="164" width="1845.7" height="28.6" fill="#dcdcdb"/><rect x="763.3" y="192.4" width="1845.7" height="1407.6" fill="#fffffc"/><rect x="2609" y="164" width="23" height="1436" fill="#e6e6e5"/><line x1="2609.3" y1="164" x2="2609.3" y2="1600" stroke="#d2d2d1" stroke-width="1.2" /><line x1="2632" y1="164" x2="2632" y2="1600" stroke="#dededd" stroke-width="1" /><rect x="2610" y="164" width="22" height="21" fill="#f3f3f2"/><path d="M2614.2 176.8h13l-6.5 -7z" fill="#555"/><rect x="2610" y="258" width="22" height="1208.5" fill="url(#sbh)"/><line x1="2610" y1="258" x2="2632" y2="258" stroke="#d2d2d1" stroke-width="1" /><line x1="2610" y1="1466.5" x2="2632" y2="1466.5" stroke="#d2d2d1" stroke-width="1" /><rect x="2633" y="126.3" width="43" height="1473.7" fill="#efefee"/><rect x="2641.5" y="130" width="60" height="60" fill="#f6f6f5" rx="5" stroke="#c9c9c8" stroke-width="1.3"/><rect x="2642.3" y="179.5" width="60" height="12" fill="#efefee"/><rect x="2633" y="180.5" width="9.5" height="12" fill="#efefee"/><text x="2661" y="163.5" font-size="26.67" fill="#1b1b1b" stroke="#1b1b1b" textLength="14" lengthAdjust="spacingAndGlyphs">It</text><text x="2649" y="206.8" font-size="26.67" fill="#1b1b1b" stroke="#1b1b1b" textLength="26" lengthAdjust="spacingAndGlyphs">Ite</text><rect x="2642" y="218.7" width="60" height="632.6" fill="#fffffd" stroke="#c6c6c5" stroke-width="1.3"/><rect x="2642.8" y="219.5" width="60" height="38.5" fill="#f0f0ef"/><line x1="2642.8" y1="258.3" x2="2676" y2="258.3" stroke="#d6d6d5" stroke-width="1" /><path d="M2649.5 238.5q11 -9 24 0q-12 8 -24 0z" fill="#f2f2f2" stroke="#7a7a7a" stroke-width="1.2"/><circle cx="2661.5" cy="238" r="4.2" fill="#8a8a8a" stroke="#555" stroke-width="1"/><circle cx="2662.5" cy="236.8" r="1.3" fill="#fff"/><rect x="2642.8" y="259.2" width="60" height="35.6" fill="#4a86c5"/><rect x="2650.5" y="266" width="20" height="22.7" fill="#ffffff" stroke="#d9e4f0" stroke-width="1"/><path d="M2654.500 277.5l4.500 5.500l7.500 -12.500" fill="none" stroke="#111" stroke-width="2.3"/><rect x="2641.5" y="867.5" width="60" height="45" fill="#e3e3e2" rx="4" stroke="#c9c9c8" stroke-width="1.3"/><text x="2662.5" y="898.4" font-size="26.67" fill="#1b1b1b" stroke="#1b1b1b" textLength="22" lengthAdjust="spacingAndGlyphs">La</text><text x="2649" y="941.5" font-size="26.67" fill="#1b1b1b" stroke="#1b1b1b" textLength="27" lengthAdjust="spacingAndGlyphs">Gu</text><rect x="2636.5" y="925" width="1.3" height="1.6" fill="#b5b5b4"/><rect x="2636.5" y="930" width="1.3" height="1.6" fill="#b5b5b4"/><rect x="2636.5" y="935" width="1.3" height="1.6" fill="#b5b5b4"/><rect x="2636.5" y="940" width="1.3" height="1.6" fill="#b5b5b4"/><rect x="2636.5" y="945" width="1.3" height="1.6" fill="#b5b5b4"/><rect x="2636.5" y="950" width="1.3" height="1.6" fill="#b5b5b4"/><rect x="2636.5" y="955" width="1.3" height="1.6" fill="#b5b5b4"/><rect x="2636.5" y="960" width="1.3" height="1.6" fill="#b5b5b4"/><text x="2661" y="1009.5" font-size="26.67" fill="#1b1b1b" stroke="#1b1b1b" textLength="24" lengthAdjust="spacingAndGlyphs">Pa</text><path d="M2664 1050.5h17l-8.5 11.5z" fill="#3c3c3c"/><rect x="2661.5" y="1076.3" width="40" height="290.3" fill="#ebebea" rx="3" stroke="#dbdbda" stroke-width="1.3"/><path d="M2664 1391.5h17l-8.5 11.5z" fill="#3c3c3c"/><rect x="2661.5" y="1418" width="40" height="200" fill="#ebebea" rx="3" stroke="#dbdbda" stroke-width="1.3"/><rect x="7" y="12.5" width="32.5" height="35" fill="#6386b1" rx="3.5" stroke="#4b6a92" stroke-width="1.4"/><rect x="11.5" y="14.5" width="23.5" height="17.5" fill="#f6f6f4" stroke="#d0d4da" stroke-width="0.8"/><line x1="14.5" y1="17.7" x2="32" y2="17.7" stroke="#5d6670" stroke-width="1.3" /><line x1="14.5" y1="21.2" x2="32" y2="21.2" stroke="#5d6670" stroke-width="1.3" /><line x1="14.5" y1="24.7" x2="32" y2="24.7" stroke="#5d6670" stroke-width="1.3" /><line x1="14.5" y1="28.2" x2="32" y2="28.2" stroke="#5d6670" stroke-width="1.3" /><rect x="14.5" y="36" width="17.5" height="9.5" fill="#dfe5ec" stroke="#c7d0da" stroke-width="0.8"/><rect x="17.5" y="37.5" width="4.5" height="6.5" fill="#2f4058"/><line x1="57.3" y1="16" x2="57.3" y2="47" stroke="#dcdcdb" stroke-width="1.4" /><path d="M71.6 14.7h26.6l9 9v23.7h-35.6z" fill="#fdfdfc" stroke="#8f8f8e" stroke-width="1.6" stroke-linejoin="round"/><path d="M98.2 14.7v9h9" fill="none" stroke="#8f8f8e" stroke-width="1.3"/><rect x="74" y="17" width="24" height="28.5" fill="none" stroke="#d5e0ef" stroke-width="1.2"/><path d="M75 16.9h15.3v7.4h-6.8v24.2h-8.5z" fill="#f0da5c" stroke="#c9b030" stroke-width="0.9"/><line x1="79.5" y1="27" x2="83.2" y2="27" stroke="#a08a22" stroke-width="1" /><line x1="79.5" y1="30.5" x2="83.2" y2="30.5" stroke="#a08a22" stroke-width="1" /><line x1="79.5" y1="34" x2="83.2" y2="34" stroke="#a08a22" stroke-width="1" /><line x1="79.5" y1="37.5" x2="83.2" y2="37.5" stroke="#a08a22" stroke-width="1" /><line x1="79.5" y1="41" x2="83.2" y2="41" stroke="#a08a22" stroke-width="1" /><line x1="79.5" y1="44.5" x2="83.2" y2="44.5" stroke="#a08a22" stroke-width="1" /><rect x="91.7" y="32.8" width="17.5" height="18.3" fill="#cbb52f" rx="2.5" stroke="#b39d22" stroke-width="1"/><path d="M100.45 41.95L106.85 41.95M100.45 41.95L104.98 46.48M100.45 41.95L100.45 48.35M100.45 41.95L95.92 46.48M100.45 41.95L94.05 41.95M100.45 41.95L95.92 37.42M100.45 41.95L100.45 35.55M100.45 41.95L104.98 37.42" fill="none" stroke="#fffdf0" stroke-width="1.7"/><circle cx="100.45" cy="41.95" r="3.3" fill="#fffdf0"/><circle cx="100.45" cy="41.95" r="1.2" fill="#d8c44a"/><rect x="124.1" y="15.2" width="33.8" height="32.2" fill="#cfcfce" stroke="#8c8c8b" stroke-width="1.5"/><path d="M129.7 11.8h24.3l9 9v21.5h-33.3z" fill="#fdfdfc" stroke="#8f8f8e" stroke-width="1.6" stroke-linejoin="round"/><path d="M154 11.8v9h9" fill="none" stroke="#8f8f8e" stroke-width="1.3"/><rect x="132.2" y="14.2" width="22" height="25.5" fill="none" stroke="#d5e0ef" stroke-width="1.2"/><rect x="145.5" y="32.8" width="17.5" height="18.3" fill="#cbb52f" rx="2.5" stroke="#b39d22" stroke-width="1"/><path d="M154.25 41.95L160.65 41.95M154.25 41.95L158.78 46.48M154.25 41.95L154.25 48.35M154.25 41.95L149.72 46.48M154.25 41.95L147.85 41.95M154.25 41.95L149.72 37.42M154.25 41.95L154.25 35.55M154.25 41.95L158.78 37.42" fill="none" stroke="#fffdf0" stroke-width="1.7"/><circle cx="154.25" cy="41.95" r="3.3" fill="#fffdf0"/><circle cx="154.25" cy="41.95" r="1.2" fill="#d8c44a"/><path d="M180 14.7h27l9 9v23.7h-36z" fill="#fdfdfc" stroke="#8f8f8e" stroke-width="1.6" stroke-linejoin="round"/><path d="M207 14.7v9h9" fill="none" stroke="#8f8f8e" stroke-width="1.3"/><rect x="182.6" y="17.2" width="24.5" height="27.6" fill="none" stroke="#d5e0ef" stroke-width="1.2"/><path d="M199.5 33l15 15" fill="none" stroke="#85751f" stroke-width="6.4" stroke-linecap="round"/><path d="M199.5 33l15 15" fill="none" stroke="#e9d563" stroke-width="4.2" stroke-linecap="round"/><path d="M191.5 27.500a6.300 6.300 0 0 1 9 -5.500l-4.300 4.300l1.200 3.600l3.600 1.200l4.300 -4.300a6.300 6.300 0 0 1 -8 8.500z" fill="#e4e6e8" stroke="#75797d" stroke-width="1.2"/><path d="M234.7 46V19.5q0 -2.500 2.500 -2.500h10.500l3.500 4.500h14q2.500 0 2.500 2.500v4.500" fill="#ead456" stroke="#cdb63c" stroke-width="1.1"/><path d="M234.7 46.300l4.200 -17q0.500 -2 2.500 -2h28.300q2.200 0 1.600 2.200l-4.200 16.800z" fill="#f3df70" stroke="#d3bd44" stroke-width="1.1"/><rect x="290.5" y="12.5" width="32.5" height="35" fill="#6386b1" rx="3.5" stroke="#4b6a92" stroke-width="1.4"/><rect x="295" y="14.5" width="23.5" height="17.5" fill="#f6f6f4" stroke="#d0d4da" stroke-width="0.8"/><line x1="298" y1="17.7" x2="315.5" y2="17.7" stroke="#5d6670" stroke-width="1.3" /><line x1="298" y1="21.2" x2="315.5" y2="21.2" stroke="#5d6670" stroke-width="1.3" /><line x1="298" y1="24.7" x2="315.5" y2="24.7" stroke="#5d6670" stroke-width="1.3" /><line x1="298" y1="28.2" x2="315.5" y2="28.2" stroke="#5d6670" stroke-width="1.3" /><rect x="298" y="36" width="17.5" height="9.5" fill="#dfe5ec" stroke="#c7d0da" stroke-width="0.8"/><rect x="301" y="37.5" width="4.5" height="6.5" fill="#2f4058"/><rect x="310.5" y="34.5" width="17" height="16.5" fill="#5a9a62" rx="3" stroke="#3f7a48" stroke-width="1"/><path d="M314.5 47l8.5 -8.5" fill="none" stroke="#f4fbf4" stroke-width="3"/><line x1="341.3" y1="16" x2="341.3" y2="47" stroke="#dcdcdb" stroke-width="1.4" /><path d="M360.5 14.5h18l9 9v24.5h-27z" fill="#fdfdfc" stroke="#8f8f8e" stroke-width="1.6" stroke-linejoin="round"/><path d="M378.5 14.5v9h9" fill="none" stroke="#8f8f8e" stroke-width="1.3"/><rect x="375.2" y="32.8" width="17.5" height="18.3" fill="#cbb52f" rx="2.5" stroke="#b39d22" stroke-width="1"/><path d="M383.95 41.95L390.35 41.95M383.95 41.95L388.48 46.48M383.95 41.95L383.95 48.35M383.95 41.95L379.42 46.48M383.95 41.95L377.55 41.95M383.95 41.95L379.42 37.42M383.95 41.95L383.95 35.55M383.95 41.95L388.48 37.42" fill="none" stroke="#fffdf0" stroke-width="1.7"/><circle cx="383.95" cy="41.95" r="3.3" fill="#fffdf0"/><circle cx="383.95" cy="41.95" r="1.2" fill="#d8c44a"/><line x1="407" y1="16" x2="407" y2="47" stroke="#dcdcdb" stroke-width="1.4" /><g transform="translate(421.5 14.5)"><rect x="7" y="0" width="20" height="10" fill="#eef0ee" stroke="#9aa0a6" stroke-width="1"/><rect x="0" y="8.5" width="34" height="18" fill="#6386b1" rx="5" stroke="#4b6a92" stroke-width="1.3"/><rect x="3.5" y="12" width="27" height="3" fill="#8aa6c6"/><rect x="8" y="20" width="18" height="13.5" fill="#fafaf9" stroke="#70767c" stroke-width="1.2"/><line x1="11" y1="24" x2="23" y2="24" stroke="#555b61" stroke-width="1.2" /><line x1="11" y1="27" x2="23" y2="27" stroke="#555b61" stroke-width="1.2" /><line x1="11" y1="30" x2="23" y2="30" stroke="#555b61" stroke-width="1.2" /></g><path d="M476 12.5h17l9 9v25h-26z" fill="#fdfdfc" stroke="#8f8f8e" stroke-width="1.6" stroke-linejoin="round"/><path d="M493 12.5v9h9" fill="none" stroke="#8f8f8e" stroke-width="1.3"/><rect x="476.8" y="25.5" width="24.5" height="12.5" fill="#6ea0d0"/><path d="M476.8 38v-5.5q8 -5 14 -2.5t10.5 2v6z" fill="#c9ad3e"/><rect x="494.5" y="33.5" width="19" height="17" fill="#4b6074" rx="3" stroke="#394b5c" stroke-width="1"/><path d="M497.5 37.5h4v9h-4M501.5 42h8M506.5 38.5l3.5 3.5l-3.5 3.5" fill="none" stroke="#f4f6f8" stroke-width="1.8"/><path d="M530.5 12.5h17l9 9v25h-26z" fill="#fdfdfc" stroke="#8f8f8e" stroke-width="1.6" stroke-linejoin="round"/><path d="M547.5 12.5v9h9" fill="none" stroke="#8f8f8e" stroke-width="1.3"/><path d="M534 31L551 31M536.49 24.99L548.51 37.01M542.5 22.5L542.5 39.5M548.51 24.99L536.49 37.01" fill="none" stroke="#f08c1e" stroke-width="2.6"/><rect x="549" y="33.5" width="19" height="17" fill="#4b6074" rx="3" stroke="#394b5c" stroke-width="1"/><path d="M552 37.5h4v9h-4M556 42h8M561 38.5l3.5 3.5l-3.5 3.5" fill="none" stroke="#f4f6f8" stroke-width="1.8"/><path d="M584.5 12.5h17l9 9v25h-26z" fill="#fdfdfc" stroke="#8f8f8e" stroke-width="1.6" stroke-linejoin="round"/><path d="M601.5 12.5v9h9" fill="none" stroke="#8f8f8e" stroke-width="1.3"/><path d="M588 42q7 -8 8.5 -19q0.5 -4 -1.5 -3.5q-2 1 0 6.5q3 8 12 11.5q4 1 3.5 -1q-1 -2.5 -9 -1q-7 1.5 -13.5 6.5z" fill="none" stroke="#d83a2e" stroke-width="2"/><rect x="603" y="33.5" width="19" height="17" fill="#4b6074" rx="3" stroke="#394b5c" stroke-width="1"/><path d="M606 37.5h4v9h-4M610 42h8M615 38.5l3.5 3.5l-3.5 3.5" fill="none" stroke="#f4f6f8" stroke-width="1.8"/><path d="M645.5 30.5l12 -12v7q14 -1 14.5 10.5q0 9.5 -10 10.5l-2 -5.5q6 -1 5.5 -5q-1 -4.5 -8 -4v10z" fill="#e98a35" stroke="#c46a1a" stroke-width="1.2" stroke-linejoin="round"/><path d="M725.5 30.5l-12 -12v7q-14 -1 -14.5 10.5q0 9.5 10 10.5l2 -5.5q-6 -1 -5.5 -5q1 -4.5 8 -4v10z" fill="#e4e4e3" stroke="#d9d9d8" stroke-width="1" stroke-linejoin="round"/><rect x="753.3" y="19" width="1.6" height="1.7" fill="#cdcdcc"/><rect x="758.3" y="19" width="1.6" height="1.7" fill="#cdcdcc"/><rect x="753.3" y="24" width="1.6" height="1.7" fill="#cdcdcc"/><rect x="758.3" y="24" width="1.6" height="1.7" fill="#cdcdcc"/><rect x="753.3" y="29" width="1.6" height="1.7" fill="#cdcdcc"/><rect x="758.3" y="29" width="1.6" height="1.7" fill="#cdcdcc"/><rect x="753.3" y="34" width="1.6" height="1.7" fill="#cdcdcc"/><rect x="758.3" y="34" width="1.6" height="1.7" fill="#cdcdcc"/><rect x="753.3" y="39" width="1.6" height="1.7" fill="#cdcdcc"/><rect x="758.3" y="39" width="1.6" height="1.7" fill="#cdcdcc"/><rect x="753.3" y="44" width="1.6" height="1.7" fill="#cdcdcc"/><rect x="758.3" y="44" width="1.6" height="1.7" fill="#cdcdcc"/><rect x="772.5" y="17" width="38.5" height="27.5" fill="#e2e2e1" rx="5" stroke="#d4d4d3" stroke-width="1.2"/><path d="M777 24h30M777 31h30M777 38h30M786 19v24M798 19v24" fill="none" stroke="#ececeb" stroke-width="1.5"/><rect x="830" y="14.5" width="4.5" height="33" fill="#dbdbda"/><path d="M836 31l15 -15.5v9h11.5v13h-11.5v9z" fill="#dbdbda"/><path d="M887.5 31l15 -15.5v9h13.5v13h-13.5v9z" fill="#dbdbda"/><rect x="930" y="7.2" width="127" height="47.6" fill="#f1f1f0" rx="5" stroke="#cbcbca" stroke-width="1.5"/><rect x="930.8" y="8" width="93" height="46" fill="#eeeeed" rx="5"/><line x1="1024" y1="8" x2="1024" y2="54" stroke="#d2d2d1" stroke-width="1.3" /><text x="936" y="41" font-size="31" fill="#c9c9c8" stroke="#c9c9c8" textLength="10" lengthAdjust="spacingAndGlyphs">1</text><path d="M1033 27.5h11l-5.5 6z" fill="#cdcdcc"/><path d="M1099.5 31l-15 -15.5v9h-13.5v13h13.5v9z" fill="#dbdbda"/><path d="M1151 31l-15 -15.5v9h-12v13h12v9z" fill="#dbdbda"/><rect x="1152.5" y="14.5" width="4.5" height="33" fill="#dbdbda"/><g transform="translate(1178 14.5)"><rect x="7" y="0" width="20" height="10" fill="#ececeb" stroke="#d6d6d5" stroke-width="1"/><rect x="0" y="8.5" width="34" height="18" fill="#dededd" rx="5" stroke="#d3d3d2" stroke-width="1.3"/><rect x="3.5" y="12" width="27" height="3" fill="#e6e6e5"/><rect x="8" y="20" width="18" height="13.5" fill="#ececeb" stroke="#d6d6d5" stroke-width="1.2"/><line x1="11" y1="24" x2="23" y2="24" stroke="#dadad9" stroke-width="1.2" /><line x1="11" y1="27" x2="23" y2="27" stroke="#dadad9" stroke-width="1.2" /><line x1="11" y1="30" x2="23" y2="30" stroke="#dadad9" stroke-width="1.2" /></g><path d="M1231 12.5h17l9 9v25h-26z" fill="#ededec" stroke="#d9d9d8" stroke-width="1.6" stroke-linejoin="round"/><path d="M1248 12.5v9h9" fill="none" stroke="#d9d9d8" stroke-width="1.3"/><rect x="1231.8" y="24" width="24.5" height="14" fill="#dcdcdb"/><rect x="1250" y="33.5" width="18.5" height="17" fill="#dadad9" rx="3" stroke="#cfcfce" stroke-width="1"/><path d="M1254 38h3v8h-3M1258 42h7" fill="none" stroke="#f3f3f2" stroke-width="1.6"/><path d="M1280.8 29h9l-4.5 5z" fill="#d2d2d1"/><rect x="1303.5" y="13" width="33" height="25.5" fill="#8fb3da" rx="4" stroke="#5d83b0" stroke-width="1.3"/><path d="M1306 21h28M1306 29h28M1314 14v23M1326 14v23" fill="none" stroke="#c9dcf0" stroke-width="1.2"/><circle cx="1321.5" cy="25" r="6.5" fill="#e9eef3" stroke="#6e7275" stroke-width="1.3"/><circle cx="1320.5" cy="24" r="2.8" fill="#4a5a6a"/><path d="M1326 30.5l13.5 14" fill="none" stroke="#8a7a2a" stroke-width="7" stroke-linecap="round"/><path d="M1326 30.5l13.5 14" fill="none" stroke="#e5d25e" stroke-width="4.6" stroke-linecap="round"/><path d="M16.2 102l-10 10.5" fill="none" stroke="#7a6a22" stroke-width="5" stroke-linecap="round"/><path d="M16.2 102l-10 10.5" fill="none" stroke="#f2d63c" stroke-width="2.8" stroke-linecap="round"/><circle cx="16.9" cy="101.3" r="2.7" fill="#141414"/><circle cx="27.2" cy="91" r="14" fill="#f1f1f0" stroke="#9b9b9a" stroke-width="1.8"/><path d="M18.45 91h17.5M27.2 82.25v17.5" fill="none" stroke="#557fb4" stroke-width="5.4"/><path d="M19.45 91h15.5M27.2 83.25v15.5" fill="none" stroke="#7099cb" stroke-width="3.4"/><path d="M70.6 102l-10 10.5" fill="none" stroke="#7a6a22" stroke-width="5" stroke-linecap="round"/><path d="M70.6 102l-10 10.5" fill="none" stroke="#f2d63c" stroke-width="2.8" stroke-linecap="round"/><circle cx="71.3" cy="101.3" r="2.7" fill="#141414"/><circle cx="81.6" cy="91" r="14" fill="#f1f1f0" stroke="#9b9b9a" stroke-width="1.8"/><path d="M72.85 91h17.5" fill="none" stroke="#557fb4" stroke-width="5.4"/><path d="M73.85 91h15.5" fill="none" stroke="#7099cb" stroke-width="3.4"/><rect x="116" y="79.6" width="14" height="22" fill="#fafaf9" stroke="#a4a4a3" stroke-width="1.3"/><path d="M125.6 102l-10 10.5" fill="none" stroke="#7a6a22" stroke-width="5" stroke-linecap="round"/><path d="M125.6 102l-10 10.5" fill="none" stroke="#f2d63c" stroke-width="2.8" stroke-linecap="round"/><circle cx="126.3" cy="101.3" r="2.7" fill="#141414"/><circle cx="136.6" cy="91" r="14" fill="#f1f1f0" stroke="#9b9b9a" stroke-width="1.8"/><text x="126.8" y="97" font-size="16" fill="#454545" stroke="#454545" font-weight="bold" textLength="19" lengthAdjust="spacingAndGlyphs">1:1</text><g transform="translate(168 76)"><path d="M9.5 26l-9 9.5" fill="none" stroke="#7a6a22" stroke-width="5" stroke-linecap="round"/><path d="M9.5 26l-9 9.5" fill="none" stroke="#f2d63c" stroke-width="2.8" stroke-linecap="round"/><circle cx="11" cy="25" r="2.7" fill="#141414"/><circle cx="21.3" cy="17.2" r="11.5" fill="#f1f1f0" stroke="#9b9b9a" stroke-width="1.8"/><path d="M5 0.5h13l-4 4l5.5 5.5l-4.5 4.500l-5.500 -5.500l-4.500 4.500z" fill="#6f93c2" stroke="#5578a8" stroke-width="0.8"/><path d="M38.5 0.5h-13l4 4l-5.500 5.500l4.500 4.500l5.500 -5.500l4.500 4.500z" fill="#6f93c2" stroke="#5578a8" stroke-width="0.8"/><path d="M38.5 33h-13l4 -4l-5.500 -5.500l4.500 -4.500l5.500 5.500l4.500 -4.500z" fill="#6f93c2" stroke="#5578a8" stroke-width="0.8"/></g><g transform="translate(224 78)"><path d="M3 14.5q1.5 -12 14 -12.5q6.5 0 10.5 4l4.5 -4.5v14h-14l4.5 -4.5q-2.5 -2.5 -6 -2.5q-6.5 0.5 -7.5 6z" fill="#4f8fd6" stroke="#3a71b4" stroke-width="1"/><path d="M32 21.5q-1.5 12 -14 12.5q-6.500 0 -10.5 -4l-4.5 4.500v-14h14l-4.5 4.500q2.500 2.500 6 2.500q6.500 -0.500 7.500 -6z" fill="#5a99de" stroke="#3a71b4" stroke-width="1"/></g><rect x="282.3" y="84" width="1.6" height="1.7" fill="#cdcdcc"/><rect x="287.3" y="84" width="1.6" height="1.7" fill="#cdcdcc"/><rect x="282.3" y="89" width="1.6" height="1.7" fill="#cdcdcc"/><rect x="287.3" y="89" width="1.6" height="1.7" fill="#cdcdcc"/><rect x="282.3" y="94" width="1.6" height="1.7" fill="#cdcdcc"/><rect x="287.3" y="94" width="1.6" height="1.7" fill="#cdcdcc"/><rect x="282.3" y="99" width="1.6" height="1.7" fill="#cdcdcc"/><rect x="287.3" y="99" width="1.6" height="1.7" fill="#cdcdcc"/><rect x="282.3" y="104" width="1.6" height="1.7" fill="#cdcdcc"/><rect x="287.3" y="104" width="1.6" height="1.7" fill="#cdcdcc"/><rect x="282.3" y="109" width="1.6" height="1.7" fill="#cdcdcc"/><rect x="287.3" y="109" width="1.6" height="1.7" fill="#cdcdcc"/><rect x="306.2" y="81.3" width="20.5" height="18.4" fill="#cfe2f0" stroke="#7d9cb6" stroke-width="1.5"/><path d="M320.5 99v-8a7.500 7.500 0 0 1 15 0v8" fill="none" stroke="#a9acaf" stroke-width="5"/><path d="M320.5 99v-8a7.500 7.500 0 0 1 15 0v8" fill="none" stroke="#e9eaeb" stroke-width="2.2"/><rect x="316.5" y="98.6" width="23.2" height="14.7" fill="#ecd640" rx="1.2" stroke="#cdb426" stroke-width="1.2"/><rect x="317.5" y="99.6" width="21.2" height="4" fill="#f3e262"/><rect x="360.5" y="86.2" width="11" height="18.4" fill="#cfe2f0" stroke="#7d9cb6" stroke-width="1.5"/><circle cx="380.6" cy="90" r="10" fill="#cfe0ee" stroke="#a9acaf" stroke-width="2.4"/><path d="M375.5 88.500q5 -5 9.500 0.500M375 85.500v4h4" fill="none" stroke="#eef2f5" stroke-width="1.8"/><rect x="370.3" y="98.6" width="23.2" height="14.7" fill="#ecd640" rx="1.2" stroke="#cdb426" stroke-width="1.2"/><rect x="371.3" y="99.6" width="21.2" height="4" fill="#f3e262"/><rect x="418.2" y="92.7" width="20" height="15.2" fill="#cfe2f0" stroke="#7d9cb6" stroke-width="1.3"/><circle cx="435" cy="91" r="10.3" fill="#cfe2f0" stroke="#7d9cb6" stroke-width="1.3"/><rect x="414.4" y="79.1" width="3.2" height="3.2" fill="#111"/><rect x="444.1" y="79.1" width="3.2" height="3.2" fill="#111"/><rect x="414.4" y="108.8" width="3.2" height="3.2" fill="#111"/><rect x="444.1" y="108.8" width="3.2" height="3.2" fill="#111"/><rect x="472.6" y="92.7" width="20" height="15.2" fill="#eceeb4" stroke="#a9b59a" stroke-width="1.3"/><circle cx="489.5" cy="91" r="10.3" fill="#cfe2f0" stroke="#7d9cb6" stroke-width="1.3"/><rect x="477" y="79.1" width="3.2" height="3.2" fill="#111"/><rect x="498.4" y="79.1" width="3.2" height="3.2" fill="#111"/><rect x="468.6" y="89.2" width="3.2" height="3.2" fill="#111"/><rect x="477" y="100.5" width="3.2" height="3.2" fill="#111"/><rect x="498.4" y="100.5" width="3.2" height="3.2" fill="#111"/><rect x="468.6" y="108.8" width="3.2" height="3.2" fill="#111"/><rect x="493.3" y="108.8" width="3.2" height="3.2" fill="#111"/><rect x="523.9" y="92.9" width="25" height="18.5" fill="#cfe2f0" stroke="#9db6cc" stroke-width="1.4"/><rect x="530.4" y="79.4" width="25" height="18.6" fill="#f3f2aa" stroke="#aaaaa2" stroke-width="1.4"/><path d="M553.05 110.4h9.3l-4.65 4.8z" fill="#555"/><rect x="579" y="79.9" width="15.8" height="13" fill="#d3f5cc" stroke="#a6d49d" stroke-width="1.4"/><rect x="579" y="96.1" width="22.8" height="15.3" fill="#cfe2f0" stroke="#9db6cc" stroke-width="1.4"/><line x1="578.4" y1="77.6" x2="578.4" y2="113.3" stroke="#2a2a2a" stroke-width="1.9" /><path d="M607.35 110.4h9.3l-4.65 4.8z" fill="#555"/><rect x="630.5" y="88.2" width="7.9" height="16.3" fill="#d3f5cc" stroke="#a6d49d" stroke-width="1.2"/><rect x="645.8" y="87.8" width="10.6" height="23.6" fill="#cfe2f0" stroke="#9db6cc" stroke-width="1.2"/><rect x="660.6" y="88.2" width="7" height="13" fill="#d3f5cc" stroke="#a6d49d" stroke-width="1.2"/><path d="M631 79.4v12.100M646 79.4v12.100M660.900 79.4v12.100" fill="none" stroke="#4f4f4f" stroke-width="2"/><path d="M661.95 110.4h9.3l-4.65 4.8z" fill="#555"/><rect x="687" y="79.4" width="19" height="32" fill="#cfe2f0" stroke="#9db6cc" stroke-width="1.4"/><path d="M687.500 91.500l6 4.200l-6 4.200zM705.500 91.500l-6 4.200l6 4.200z" fill="#7f9fc0"/><rect x="710.7" y="79.4" width="8.3" height="32" fill="#f3f0a0" stroke="#aaaaa2" stroke-width="1.4"/><path d="M716.65 110.4h9.3l-4.65 4.8z" fill="#555"/><rect x="2" y="137" width="1.4" height="1.5" fill="#cbcbca"/><rect x="2" y="141.5" width="1.4" height="1.5" fill="#cbcbca"/><rect x="5.05" y="137" width="1.4" height="1.5" fill="#cbcbca"/><rect x="5.05" y="141.5" width="1.4" height="1.5" fill="#cbcbca"/><rect x="8.1" y="137" width="1.4" height="1.5" fill="#cbcbca"/><rect x="8.1" y="141.5" width="1.4" height="1.5" fill="#cbcbca"/><rect x="11.15" y="137" width="1.4" height="1.5" fill="#cbcbca"/><rect x="11.15" y="141.5" width="1.4" height="1.5" fill="#cbcbca"/><rect x="14.2" y="137" width="1.4" height="1.5" fill="#cbcbca"/><rect x="14.2" y="141.5" width="1.4" height="1.5" fill="#cbcbca"/><rect x="17.25" y="137" width="1.4" height="1.5" fill="#cbcbca"/><rect x="17.25" y="141.5" width="1.4" height="1.5" fill="#cbcbca"/><rect x="20.3" y="137" width="1.4" height="1.5" fill="#cbcbca"/><rect x="20.3" y="141.5" width="1.4" height="1.5" fill="#cbcbca"/><rect x="23.35" y="137" width="1.4" height="1.5" fill="#cbcbca"/><rect x="23.35" y="141.5" width="1.4" height="1.5" fill="#cbcbca"/><path d="M-3 170L0.5 176V159.5Q0.5 156.5 3.6 156.5Q6.7 156.5 6.7 157.5Q6.7 155 10.1 155Q13.5 155 13.5 157.5Q13.5 156 16.8 156Q20.2 156 20.2 160Q20.2 160.500 22.3 160.500Q24.3 160.500 24.3 163V180Q24.3 187 20 192.7H5Q0 186 -3 182Z" fill="#fdfdfc" stroke="#1c1c1c" stroke-width="1.9" stroke-linejoin="round"/><path d="M6.7 158V170M13.5 158V170M20.2 161V171" fill="none" stroke="#1c1c1c" stroke-width="1.7"/><path d="M4 233l-8 8" fill="none" stroke="#d9b32a" stroke-width="5.5"/><path d="M5.500 231.500l-5 5" fill="none" stroke="#1c1c1c" stroke-width="5"/><circle cx="14.2" cy="222.4" r="13.3" fill="url(#lens)" stroke="#6e6e6d" stroke-width="1.7"/><path d="M21.500 214.500a10.500 10.500 0 0 1 0 16" fill="none" stroke="#cdcdcc" stroke-width="1.5" stroke-dasharray="2.5 2.5"/><rect x="-6" y="256.4" width="40.7" height="49.5" fill="#e4e4e3" rx="5.5" stroke="#cdcdcc" stroke-width="1.4"/><path d="M1 264.500h13" fill="none" stroke="#555" stroke-width="1.4" stroke-dasharray="1.6 3.2"/><path d="M20.900 273v11" fill="none" stroke="#555" stroke-width="1.4" stroke-dasharray="1.6 3.2"/><rect x="16" y="264.3" width="5.5" height="6.2" fill="#f4f4f3" stroke="#4a4a4a" stroke-width="1.3"/><rect x="16.8" y="285.8" width="4.8" height="6.8" fill="#f4f4f3" stroke="#4a4a4a" stroke-width="1.3"/><path d="M0.300 265.800L20.200 283L12.100 286.400L19.500 296.500L15.200 299.500L8.100 288.700L0.300 293.500Z" fill="#fdfdfc" stroke="#1c1c1c" stroke-width="1.9" stroke-linejoin="round"/><rect x="-5" y="317.4" width="29.6" height="31" fill="#dfe7ef" stroke="#9c9c9b" stroke-width="1.4"/><path d="M13.500 319.800l8.100 7.700h-4.800v5.200h-6.700v-5.200h-4.400z" fill="#6b93c6" stroke="#4f78ad" stroke-width="0.8"/><rect x="19.2" y="335.2" width="4.6" height="5.6" fill="#6b93c6" stroke="#4f78ad" stroke-width="0.8"/><rect x="10.4" y="343.6" width="6.4" height="4.6" fill="#6b93c6" stroke="#4f78ad" stroke-width="0.8"/><path d="M-2 334.500h4.500v-4l6.500 7.500l-6.500 7.500v-4h-4.500z" fill="#6b93c6" stroke="#4f78ad" stroke-width="0.8"/><path d="M3 372l19.200 8.700" fill="none" stroke="#222" stroke-width="1.6"/><path d="M3 372l-3 20" fill="none" stroke="#222" stroke-width="1.3" stroke-dasharray="2 2"/><path d="M22 381l-8 10" fill="none" stroke="#555" stroke-width="1.3"/><circle cx="3" cy="372" r="4.1" fill="#4a86d9" stroke="#3a73c4" stroke-width="0.8"/><circle cx="22.2" cy="380.7" r="4.1" fill="#4a86d9" stroke="#3a73c4" stroke-width="0.8"/><ellipse cx="10.8" cy="386.2" rx="5.2" ry="3" fill="#dcdedf" stroke="#8a8d90" stroke-width="1" transform="rotate(-28 10.8 386.2)"/><path d="M14 390.500l10.500 9.500" fill="none" stroke="#d2a62b" stroke-width="4.6"/><path d="M5 401.500l12.500 -11.500" fill="none" stroke="#f0d94c" stroke-width="4.6"/><rect x="-5" y="422" width="29" height="30" fill="url(#mapg)" stroke="#a4a4a3" stroke-width="1.3"/><rect x="14" y="444.5" width="14" height="14" fill="#6da463" rx="3" stroke="#54884b" stroke-width="1.2"/><path d="M16.8 451.5h8.4M21 447.3v8.4" fill="none" stroke="#f6fbf4" stroke-width="3"/><path d="M-3 483l8 -5h19v21l-6 5h-21z" fill="#e8e8e7" stroke="#b9b9b8" stroke-width="1.2"/><path d="M-3 490q10 -6 21 0M-3 497q10 -6 21 0M5 479v25M13 479v25" fill="none" stroke="#cfcfce" stroke-width="1"/><rect x="14" y="497" width="14" height="14" fill="#6da463" rx="3" stroke="#54884b" stroke-width="1.2"/><path d="M16.8 504h8.4M21 499.8v8.4" fill="none" stroke="#f6fbf4" stroke-width="3"/><rect x="-5" y="533" width="29.5" height="22" fill="#5f9fe0"/><path d="M-5 555v-9q10 -8 18 -5t11.500 3v11z" fill="#cdb95b"/><path d="M-5 555v-3q12 -4 29.500 -2v5z" fill="#b39e3a"/><rect x="14" y="550" width="14" height="14" fill="#6da463" rx="3" stroke="#54884b" stroke-width="1.2"/><path d="M16.8 557h8.4M21 552.8v8.4" fill="none" stroke="#f6fbf4" stroke-width="3"/><rect x="-6" y="586" width="30" height="22" fill="#fbfbfa" stroke="#a9a9a8" stroke-width="1.2"/><text x="1.5" y="604.5" font-size="24" fill="#555" stroke="#555" textLength="15" lengthAdjust="spacingAndGlyphs" font-family="Liberation Serif">T</text><rect x="14" y="602.5" width="14" height="14" fill="#6da463" rx="3" stroke="#54884b" stroke-width="1.2"/><path d="M16.8 609.5h8.4M21 605.3v8.4" fill="none" stroke="#f6fbf4" stroke-width="3"/><rect x="-2" y="635" width="4" height="6.5" fill="#f2c531"/><rect x="-2" y="644" width="4" height="6.5" fill="#e0452b"/><rect x="-2" y="653" width="4" height="6.5" fill="#2f9a57"/><path d="M4.500 640.500h8.500M4.500 650.500h13.500M4.500 660h6" fill="none" stroke="#9a9a99" stroke-width="2.6"/><rect x="14" y="655" width="14" height="14" fill="#6da463" rx="3" stroke="#54884b" stroke-width="1.2"/><path d="M16.8 662h8.4M21 657.8v8.4" fill="none" stroke="#f6fbf4" stroke-width="3"/><rect x="-4" y="698.5" width="30" height="5" fill="#fbfbfa" stroke="#222" stroke-width="1.6"/><rect x="4" y="699.3" width="8" height="3.4" fill="#222"/><rect x="18" y="699.3" width="4" height="3.4" fill="#222"/><rect x="14" y="707.5" width="14" height="14" fill="#6da463" rx="3" stroke="#54884b" stroke-width="1.2"/><path d="M16.8 714.5h8.4M21 710.3v8.4" fill="none" stroke="#f6fbf4" stroke-width="3"/><path d="M8.500 739l-12 30l12 -8l12 8z" fill="#dfe9f4" stroke="#4a6a93" stroke-width="1.5" stroke-linejoin="round"/><path d="M8.500 739v22l-12 8z" fill="#6e92c2"/><text x="4" y="761.5" font-size="13" fill="#fff" stroke="#fff" font-weight="bold" textLength="9" lengthAdjust="spacingAndGlyphs">N</text><rect x="12.5" y="759.5" width="14" height="14" fill="#6da463" rx="3" stroke="#54884b" stroke-width="1.2"/><path d="M15.3 766.5h8.4M19.5 762.3v8.4" fill="none" stroke="#f6fbf4" stroke-width="3"/><rect x="-6" y="805" width="22" height="16" fill="#cfe4f4" stroke="#9abcdb" stroke-width="1"/><circle cx="14" cy="808" r="10.5" fill="#f2b8b6" stroke="#e29a98" stroke-width="1"/><path d="M6 790.500l11 21h-22z" fill="#cdeccb" stroke="#8fc98c" stroke-width="1.2"/><rect x="14" y="812.5" width="14" height="14" fill="#6da463" rx="3" stroke="#54884b" stroke-width="1.2"/><path d="M16.8 819.5h8.4M21 815.3v8.4" fill="none" stroke="#f6fbf4" stroke-width="3"/><path d="M23 828.500h7l-3.500 3.500z" fill="#222"/><path d="M8 845L12.7 856.53L25.12 857.44L15.61 865.47L18.58 877.56L8 871L-2.58 877.56L0.39 865.47L-9.12 857.44L3.3 856.53z" fill="#f8ecc0" stroke="#eedca0" stroke-width="1.2" stroke-linejoin="round"/><rect x="14" y="866" width="14" height="14" fill="#6da463" rx="3" stroke="#54884b" stroke-width="1.2"/><path d="M16.8 873h8.4M21 868.8v8.4" fill="none" stroke="#f6fbf4" stroke-width="3"/><path d="M-2 931l21 -24" fill="none" stroke="#444" stroke-width="1.5"/><path d="M24.500 899.500l-10 3l7 7z" fill="#fbfbfa" stroke="#444" stroke-width="1.4" stroke-linejoin="round"/><rect x="14" y="919.5" width="14" height="14" fill="#6da463" rx="3" stroke="#54884b" stroke-width="1.2"/><path d="M16.8 926.5h8.4M21 922.3v8.4" fill="none" stroke="#f6fbf4" stroke-width="3"/><path d="M3 952.500l20 9" fill="none" stroke="#222" stroke-width="1.6"/><path d="M23 961.500l-25 14" fill="none" stroke="#222" stroke-width="1.5" stroke-dasharray="1.5 2.500"/><circle cx="3" cy="952.5" r="4.2" fill="#4a86d9"/><circle cx="23" cy="961.5" r="4.2" fill="#4a86d9"/><rect x="14" y="972" width="14" height="14" fill="#6da463" rx="3" stroke="#54884b" stroke-width="1.2"/><path d="M16.8 979h8.4M21 974.8v8.4" fill="none" stroke="#f6fbf4" stroke-width="3"/><path d="M23 985.500h7l-3.500 3.500z" fill="#222"/><rect x="-6" y="1003.5" width="30" height="28.5" fill="#fbfbfa" stroke="#a9a9a8" stroke-width="1.2"/><path d="M8 1009l-5.500 5.500l5.500 5.500M17 1009l5.500 5.500l-5.500 5.500M14.500 1007.500l-4 14" fill="none" stroke="#444" stroke-width="1.4"/><path d="M-3 1015h7M-3 1020.500h9M-3 1026h11" fill="none" stroke="#6f9fdc" stroke-width="2.4"/><rect x="14" y="1024.5" width="14" height="14" fill="#6da463" rx="3" stroke="#54884b" stroke-width="1.2"/><path d="M16.8 1031.5h8.4M21 1027.3v8.4" fill="none" stroke="#f6fbf4" stroke-width="3"/><rect x="-5" y="1056.5" width="29.5" height="29" fill="#fbfbfa" stroke="#7fa6d9" stroke-width="1.2"/><rect x="-5" y="1056.5" width="29.5" height="7" fill="#9cbce6"/><path d="M-3 1068h24M-3 1073.500h24M-3 1079h24" fill="none" stroke="#a9c4ea" stroke-width="2.4"/><path d="M6 1057v28" fill="none" stroke="#dfe9f7" stroke-width="1.2"/><rect x="12.5" y="1076" width="14" height="14" fill="#6da463" rx="3" stroke="#54884b" stroke-width="1.2"/><path d="M15.3 1083h8.4M19.5 1078.8v8.4" fill="none" stroke="#f6fbf4" stroke-width="3"/><rect x="-5" y="1109" width="29.5" height="29" fill="#fbfbfa" stroke="#7fa6d9" stroke-width="1.2"/><rect x="-5" y="1109" width="29.5" height="7" fill="#9cbce6"/><path d="M-3 1121h24M-3 1127h24" fill="none" stroke="#cfcfce" stroke-width="1.2"/><path d="M4 1128l13 -19" fill="none" stroke="#b9893e" stroke-width="7"/><path d="M4 1128l13 -19" fill="none" stroke="#e9c27a" stroke-width="4"/><path d="M1.500 1131.500l1 -6.500l5 3.500z" fill="#444"/><rect x="12.5" y="1128.5" width="14" height="14" fill="#6da463" rx="3" stroke="#54884b" stroke-width="1.2"/><path d="M15.3 1135.5h8.4M19.5 1131.3v8.4" fill="none" stroke="#f6fbf4" stroke-width="3"/><rect x="-5" y="1161.5" width="29.5" height="31" fill="#fbfbfa" stroke="#7fa6d9" stroke-width="1.2"/><path d="M-5 1187q6 0 10 -5t8 -14q3 -4 5 1t6.500 8v15.500h-29.500z" fill="#c3cfc8" stroke="#7e9a8c" stroke-width="1.4"/><path d="M-4 1171h28M-4 1180h28M4 1162v30M14 1162v30" fill="none" stroke="#e3e9e6" stroke-width="0.8"/><rect x="14" y="1181.5" width="14" height="14" fill="#6da463" rx="3" stroke="#54884b" stroke-width="1.2"/><path d="M16.8 1188.5h8.4M21 1184.3v8.4" fill="none" stroke="#f6fbf4" stroke-width="3"/><rect x="-5" y="1215" width="29" height="32" fill="#ececeb"/><rect x="-4" y="1227" width="6" height="19" fill="#3fae5a" stroke="#2d8a44" stroke-width="1"/><rect x="5.5" y="1218" width="7" height="28" fill="#ea5a25" stroke="#c94412" stroke-width="1"/><rect x="15" y="1231" width="7" height="15" fill="#3fae5a" stroke="#2d8a44" stroke-width="1"/><rect x="14" y="1234.5" width="14" height="14" fill="#6da463" rx="3" stroke="#54884b" stroke-width="1.2"/><path d="M16.8 1241.5h8.4M21 1237.3v8.4" fill="none" stroke="#f6fbf4" stroke-width="3"/><line x1="948.4" y1="338.3" x2="2538.1" y2="338.3" stroke="#ececea" stroke-width="1.5" /><line x1="948.4" y1="413.4" x2="2538.1" y2="413.4" stroke="#ececea" stroke-width="1.5" /><line x1="948.4" y1="488.5" x2="2538.1" y2="488.5" stroke="#ececea" stroke-width="1.5" /><line x1="948.4" y1="563.6" x2="2538.1" y2="563.6" stroke="#ececea" stroke-width="1.5" /><line x1="948.4" y1="638.7" x2="2538.1" y2="638.7" stroke="#ececea" stroke-width="1.5" /><line x1="948.4" y1="713.8" x2="2538.1" y2="713.8" stroke="#ececea" stroke-width="1.5" /><line x1="948.4" y1="788.9" x2="2538.1" y2="788.9" stroke="#ececea" stroke-width="1.5" /><line x1="948.4" y1="864" x2="2538.1" y2="864" stroke="#ececea" stroke-width="1.5" /><line x1="948.4" y1="939.1" x2="2538.1" y2="939.1" stroke="#ececea" stroke-width="1.5" /><text x="846.05" y="281.8" font-size="29" fill="#161616" stroke="#161616" textLength="90.35" lengthAdjust="spacingAndGlyphs">500,000</text><text x="846.05" y="356.95" font-size="29" fill="#161616" stroke="#161616" textLength="90.35" lengthAdjust="spacingAndGlyphs">450,000</text><text x="846.05" y="432.1" font-size="29" fill="#161616" stroke="#161616" textLength="90.35" lengthAdjust="spacingAndGlyphs">400,000</text><text x="846.05" y="507.25" font-size="29" fill="#161616" stroke="#161616" textLength="90.35" lengthAdjust="spacingAndGlyphs">350,000</text><text x="846.05" y="582.4" font-size="29" fill="#161616" stroke="#161616" textLength="90.35" lengthAdjust="spacingAndGlyphs">300,000</text><text x="846.05" y="657.55" font-size="29" fill="#161616" stroke="#161616" textLength="90.35" lengthAdjust="spacingAndGlyphs">250,000</text><text x="846.05" y="732.7" font-size="29" fill="#161616" stroke="#161616" textLength="90.35" lengthAdjust="spacingAndGlyphs">200,000</text><text x="846.05" y="807.85" font-size="29" fill="#161616" stroke="#161616" textLength="90.35" lengthAdjust="spacingAndGlyphs">150,000</text><text x="846.05" y="883" font-size="29" fill="#161616" stroke="#161616" textLength="90.35" lengthAdjust="spacingAndGlyphs">100,000</text><text x="859.95" y="958.15" font-size="29" fill="#161616" stroke="#161616" textLength="76.45" lengthAdjust="spacingAndGlyphs">50,000</text><text x="922.5" y="1033.3" font-size="29" fill="#161616" stroke="#161616" textLength="13.9" lengthAdjust="spacingAndGlyphs">0</text><polyline points="1007,969.7 1129.64,1001.2 1252.28,436.4 1374.92,996.3 1497.56,1002 1620.2,999.6 1742.84,929.6 1865.48,877.9 1988.12,990.3 2110.76,807.5 2233.4,998 2356.04,924.8 2478.68,469.9" fill="none" stroke="#edd6c4" stroke-width="4.2" stroke-linejoin="round"/><polyline points="1007,985 1129.64,1006 1252.28,628.8 1374.92,1002.4 1497.56,1006.5 1620.2,1004.8 1742.84,957.9 1865.48,923.6 1988.12,999.6 2110.76,876.7 2233.4,1004 2356.04,955.1 2478.68,651.5" fill="none" stroke="#edd6c4" stroke-width="4.2" stroke-linejoin="round"/><circle cx="1007" cy="969.7" r="8.2" fill="#6b9b3b" stroke="#2f4a1c" stroke-width="1.2"/><circle cx="1129.64" cy="1001.2" r="8.2" fill="#6b9b3b" stroke="#2f4a1c" stroke-width="1.2"/><circle cx="1252.28" cy="436.4" r="8.2" fill="#6b9b3b" stroke="#2f4a1c" stroke-width="1.2"/><circle cx="1374.92" cy="996.3" r="8.2" fill="#6b9b3b" stroke="#2f4a1c" stroke-width="1.2"/><circle cx="1497.56" cy="1002" r="8.2" fill="#6b9b3b" stroke="#2f4a1c" stroke-width="1.2"/><circle cx="1620.2" cy="999.6" r="8.2" fill="#6b9b3b" stroke="#2f4a1c" stroke-width="1.2"/><circle cx="1742.84" cy="929.6" r="8.2" fill="#6b9b3b" stroke="#2f4a1c" stroke-width="1.2"/><circle cx="1865.48" cy="877.9" r="8.2" fill="#6b9b3b" stroke="#2f4a1c" stroke-width="1.2"/><circle cx="1988.12" cy="990.3" r="8.2" fill="#6b9b3b" stroke="#2f4a1c" stroke-width="1.2"/><circle cx="2110.76" cy="807.5" r="8.2" fill="#6b9b3b" stroke="#2f4a1c" stroke-width="1.2"/><circle cx="2233.4" cy="998" r="8.2" fill="#6b9b3b" stroke="#2f4a1c" stroke-width="1.2"/><circle cx="2356.04" cy="924.8" r="8.2" fill="#6b9b3b" stroke="#2f4a1c" stroke-width="1.2"/><circle cx="2478.68" cy="469.9" r="8.2" fill="#6b9b3b" stroke="#2f4a1c" stroke-width="1.2"/><circle cx="1007" cy="985" r="8.2" fill="#6b9b3b" stroke="#2f4a1c" stroke-width="1.2"/><circle cx="1129.64" cy="1006" r="8.2" fill="#6b9b3b" stroke="#2f4a1c" stroke-width="1.2"/><circle cx="1252.28" cy="628.8" r="8.2" fill="#6b9b3b" stroke="#2f4a1c" stroke-width="1.2"/><circle cx="1374.92" cy="1002.4" r="8.2" fill="#6b9b3b" stroke="#2f4a1c" stroke-width="1.2"/><circle cx="1497.56" cy="1006.5" r="8.2" fill="#6b9b3b" stroke="#2f4a1c" stroke-width="1.2"/><circle cx="1620.2" cy="1004.8" r="8.2" fill="#6b9b3b" stroke="#2f4a1c" stroke-width="1.2"/><circle cx="1742.84" cy="957.9" r="8.2" fill="#6b9b3b" stroke="#2f4a1c" stroke-width="1.2"/><circle cx="1865.48" cy="923.6" r="8.2" fill="#6b9b3b" stroke="#2f4a1c" stroke-width="1.2"/><circle cx="1988.12" cy="999.6" r="8.2" fill="#6b9b3b" stroke="#2f4a1c" stroke-width="1.2"/><circle cx="2110.76" cy="876.7" r="8.2" fill="#6b9b3b" stroke="#2f4a1c" stroke-width="1.2"/><circle cx="2233.4" cy="1004" r="8.2" fill="#6b9b3b" stroke="#2f4a1c" stroke-width="1.2"/><circle cx="2356.04" cy="955.1" r="8.2" fill="#6b9b3b" stroke="#2f4a1c" stroke-width="1.2"/><circle cx="2478.68" cy="651.5" r="8.2" fill="#6b9b3b" stroke="#2f4a1c" stroke-width="1.2"/><rect x="946.4" y="263.2" width="1593.7" height="751" fill="none" stroke="#2c2c2c" stroke-width="2.3"/><text x="953.65" y="1055" font-size="29" fill="#161616" stroke="#161616" textLength="106.7" lengthAdjust="spacingAndGlyphs">american</text><text x="1086.89" y="1055" font-size="29" fill="#161616" stroke="#161616" textLength="85.5" lengthAdjust="spacingAndGlyphs">belgian</text><text x="1208.03" y="1055" font-size="29" fill="#161616" stroke="#161616" textLength="88.5" lengthAdjust="spacingAndGlyphs">chinese</text><text x="1338.17" y="1055" font-size="29" fill="#161616" stroke="#161616" textLength="73.5" lengthAdjust="spacingAndGlyphs">french</text><text x="1465.81" y="1055" font-size="29" fill="#161616" stroke="#161616" textLength="63.5" lengthAdjust="spacingAndGlyphs">israel</text><text x="1567.7" y="1055" font-size="29" fill="#161616" stroke="#161616" textLength="105" lengthAdjust="spacingAndGlyphs">japanese</text><text x="1703.09" y="1055" font-size="29" fill="#161616" stroke="#161616" textLength="79.5" lengthAdjust="spacingAndGlyphs">korean</text><text x="1833.73" y="1055" font-size="29" fill="#161616" stroke="#161616" textLength="63.5" lengthAdjust="spacingAndGlyphs">malai</text><text x="1945.87" y="1055" font-size="29" fill="#161616" stroke="#161616" textLength="84.5" lengthAdjust="spacingAndGlyphs">russian</text><text x="2053.26" y="1055" font-size="29" fill="#161616" stroke="#161616" textLength="115" lengthAdjust="spacingAndGlyphs">singapore</text><text x="2181.9" y="1055" font-size="29" fill="#161616" stroke="#161616" textLength="103" lengthAdjust="spacingAndGlyphs">sri-lanka</text><text x="2333.79" y="1055" font-size="29" fill="#161616" stroke="#161616" textLength="44.5" lengthAdjust="spacingAndGlyphs">thai</text><text x="2432.18" y="1055" font-size="29" fill="#161616" stroke="#161616" textLength="93" lengthAdjust="spacingAndGlyphs">vietnam</text><rect x="826.2" y="246.4" width="1730.8" height="825.4" fill="none" stroke="#78abdf" stroke-width="1.5"/><rect x="826.2" y="246.4" width="17" height="17" fill="#fffffd" stroke="#78abdf" stroke-width="1.4"/><rect x="1683.1" y="246.4" width="17" height="17" fill="#fffffd" stroke="#78abdf" stroke-width="1.4"/><rect x="2540" y="246.4" width="17" height="17" fill="#fffffd" stroke="#78abdf" stroke-width="1.4"/><rect x="826.2" y="650.6" width="17" height="17" fill="#fffffd" stroke="#78abdf" stroke-width="1.4"/><rect x="2540" y="650.6" width="17" height="17" fill="#fffffd" stroke="#78abdf" stroke-width="1.4"/><rect x="826.2" y="1054.8" width="17" height="17" fill="#fffffd" stroke="#78abdf" stroke-width="1.4"/><rect x="1683.1" y="1054.8" width="17" height="17" fill="#fffffd" stroke="#78abdf" stroke-width="1.4"/><rect x="2540" y="1054.8" width="17" height="17" fill="#fffffd" stroke="#78abdf" stroke-width="1.4"/><g transform="translate(859.5 280.5) rotate(0)"><path d="M14.500 -8.500l-9 -8.500v4.800q-15.500 1.500 -17.500 17.200h-4.800l8.500 9.500l8.500 -9.500h-4.800q1.500 -8.500 10.100 -9.800v4.800z" fill="#fffffd" stroke="#9ab4cc" stroke-width="1.3" stroke-linejoin="round"/></g><g transform="translate(2523.5 280.5) rotate(90)"><path d="M14.500 -8.500l-9 -8.500v4.800q-15.500 1.500 -17.500 17.200h-4.800l8.500 9.500l8.500 -9.500h-4.800q1.500 -8.500 10.100 -9.800v4.800z" fill="#fffffd" stroke="#9ab4cc" stroke-width="1.3" stroke-linejoin="round"/></g><g transform="translate(861 1038.3) rotate(-90)"><path d="M14.500 -8.500l-9 -8.500v4.800q-15.500 1.500 -17.500 17.200h-4.800l8.500 9.500l8.500 -9.500h-4.800q1.500 -8.500 10.100 -9.800v4.800z" fill="#fffffd" stroke="#9ab4cc" stroke-width="1.3" stroke-linejoin="round"/></g><g transform="translate(2523.5 1038.3) rotate(180)"><path d="M14.500 -8.500l-9 -8.500v4.800q-15.500 1.500 -17.500 17.200h-4.800l8.500 9.500l8.500 -9.500h-4.800q1.500 -8.500 10.100 -9.800v4.800z" fill="#fffffd" stroke="#9ab4cc" stroke-width="1.3" stroke-linejoin="round"/></g><line x1="826.2" y1="246.4" x2="2557" y2="246.4" stroke="#7f8890" stroke-width="1.6" /><rect x="278.6" y="710.3" width="319.9" height="873.8" fill="#9a9a9a" opacity="0.45"/><rect x="276.6" y="708.3" width="318.4" height="872.3" fill="#fffffc" stroke="#a2a2a1" stroke-width="1.6"/><text x="324.5" y="738.8" font-size="26.67" fill="#1b1b1b" stroke="#1b1b1b" textLength="196.3" lengthAdjust="spacingAndGlyphs">Configure Symbol...</text><text x="324.5" y="785" font-size="26.67" fill="#1b1b1b" stroke="#1b1b1b" textLength="132" lengthAdjust="spacingAndGlyphs">Copy Symbol</text><text x="324.5" y="831.2" font-size="26.67" fill="#bdbdbc" stroke="#bdbdbc" textLength="137.5" lengthAdjust="spacingAndGlyphs">Paste Symbol</text><text x="324.5" y="877.5" font-size="26.67" fill="#1b1b1b" stroke="#1b1b1b" textLength="217.5" lengthAdjust="spacingAndGlyphs">Clear Current Symbol</text><line x1="284.5" y1="892.7" x2="587.2" y2="892.7" stroke="#c9c9c8" stroke-width="1.4" /><foreignObject x="296.4" y="901.1" width="278.8" height="278.8"><div style="width:278.8px;height:278.8px;border-radius:50%;background:conic-gradient(from 90deg,#ee2a22,#f02a8a,#ea36ea,#8a22f0,#1c1cec,#2a8af0,#66f0ee,#66f2a0,#62f03a,#b0f444,#f4ec50,#f0a030,#ee2a22);-webkit-mask:radial-gradient(circle closest-side,transparent 119.1px,#000 120.1px,#000 138.1px,transparent 139.1px);mask:radial-gradient(circle closest-side,transparent 119.1px,#000 120.1px,#000 138.1px,transparent 139.1px)"></div></foreignObject><g clip-path="url(#tric)"><g style="isolation:isolate"><rect x="297.4" y="902.1" width="276.8" height="276.8" fill="#0c0806"/><rect x="297.4" y="902.1" width="276.8" height="276.8" fill="url(#gh)" style="mix-blend-mode:plus-lighter"/><rect x="297.4" y="902.1" width="276.8" height="276.8" fill="url(#gw)" style="mix-blend-mode:plus-lighter"/></g></g><line x1="552.26" y1="1024.13" x2="573.84" y2="1021.1" stroke="#fffffc" stroke-width="2.6" /><line x1="419.2" y1="903.2" x2="419.2" y2="910.5" stroke="#2a5a12" stroke-width="1.2" /><circle cx="417.2" cy="1120.2" r="6.4" fill="none" stroke="#111" stroke-width="2.4"/><rect x="282" y="1192.8" width="305.7" height="26.7" fill="url(#chk)"/><rect x="282" y="1192.8" width="305.7" height="26.7" fill="url(#al)"/><path d="M394.6 1190.2h16.6l-8.3 7.8z" fill="#0a0a0a"/><rect x="277.4" y="1229.2" width="316.8" height="33.6" fill="#bdbdbc"/><text x="281.2" y="1253" font-size="26.67" fill="#fcfcfb" stroke="#fcfcfb" textLength="138.3" lengthAdjust="spacingAndGlyphs">Recent colors</text><rect x="277.4" y="1327.2" width="316.8" height="33" fill="#bdbdbc"/><text x="281.2" y="1350.2" font-size="26.67" fill="#fcfcfb" stroke="#fcfcfb" textLength="163" lengthAdjust="spacingAndGlyphs">Standard colors</text><rect x="282.4" y="1269.4" width="22.4" height="22.4" fill="#9d5b47" stroke="#000" stroke-width="0.9" stroke-opacity="0.16"/><rect x="312.12" y="1269.4" width="22.4" height="22.4" fill="#f6df4d" stroke="#000" stroke-width="0.9" stroke-opacity="0.16"/><rect x="341.84" y="1269.4" width="22.4" height="22.4" fill="#3e84b7" stroke="#000" stroke-width="0.9" stroke-opacity="0.16"/><rect x="371.56" y="1269.4" width="22.4" height="22.4" fill="#d8392f" stroke="#000" stroke-width="0.9" stroke-opacity="0.16"/><rect x="401.28" y="1269.4" width="22.4" height="22.4" fill="#ea2d1f" stroke="#000" stroke-width="0.9" stroke-opacity="0.16"/><rect x="431" y="1269.4" width="22.4" height="22.4" fill="#b9595b" stroke="#000" stroke-width="0.9" stroke-opacity="0.16"/><rect x="460.72" y="1269.4" width="22.4" height="22.4" fill="#adcde0" stroke="#000" stroke-width="0.9" stroke-opacity="0.16"/><rect x="490.44" y="1269.4" width="22.4" height="22.4" fill="#e18b5e" stroke="#000" stroke-width="0.9" stroke-opacity="0.16"/><rect x="520.16" y="1269.4" width="22.4" height="22.4" fill="#cfd76b" stroke="#000" stroke-width="0.9" stroke-opacity="0.16"/><rect x="549.88" y="1269.4" width="22.4" height="22.4" fill="#d66a95" stroke="#000" stroke-width="0.9" stroke-opacity="0.16"/><rect x="282.4" y="1299.4" width="22.4" height="22.4" fill="#be4a47" stroke="#000" stroke-width="0.9" stroke-opacity="0.16"/><rect x="312.12" y="1299.4" width="22.4" height="22.4" fill="#e8292f" stroke="#000" stroke-width="0.9" stroke-opacity="0.16"/><rect x="341.84" y="1299.4" width="22.4" height="22.4" fill="#5571f0" stroke="#000" stroke-width="0.9" stroke-opacity="0.16"/><rect x="371.56" y="1299.4" width="22.4" height="22.4" fill="#ffffff" stroke="#d4d4d3" stroke-width="1"/><rect x="401.28" y="1299.4" width="22.4" height="22.4" fill="#6ea299" stroke="#000" stroke-width="0.9" stroke-opacity="0.16"/><rect x="431" y="1299.4" width="22.4" height="22.4" fill="#e8292f" stroke="#000" stroke-width="0.9" stroke-opacity="0.16"/><rect x="460.72" y="1299.4" width="22.4" height="22.4" fill="#62b258" stroke="#000" stroke-width="0.9" stroke-opacity="0.16"/><rect x="490.44" y="1299.4" width="22.4" height="22.4" fill="#000000" stroke="#000" stroke-width="0.9" stroke-opacity="0.16"/><rect x="520.16" y="1299.4" width="22.4" height="22.4" fill="#8a5ba3" stroke="#000" stroke-width="0.9" stroke-opacity="0.16"/><rect x="549.88" y="1299.4" width="22.4" height="22.4" fill="#3d6a5e" stroke="#000" stroke-width="0.9" stroke-opacity="0.16"/><rect x="282.4" y="1367.4" width="22.4" height="22.4" fill="#000000" stroke="#000" stroke-width="0.9" stroke-opacity="0.16"/><rect x="312.12" y="1367.4" width="22.4" height="22.4" fill="#ffffff" stroke="#d4d4d3" stroke-width="1"/><rect x="341.84" y="1367.4" width="22.4" height="22.4" fill="#b0d0df" stroke="#000" stroke-width="0.9" stroke-opacity="0.16"/><rect x="371.56" y="1367.4" width="22.4" height="22.4" fill="#3c82b6" stroke="#000" stroke-width="0.9" stroke-opacity="0.16"/><rect x="401.28" y="1367.4" width="22.4" height="22.4" fill="#bde09a" stroke="#000" stroke-width="0.9" stroke-opacity="0.16"/><rect x="431" y="1367.4" width="22.4" height="22.4" fill="#4da83f" stroke="#000" stroke-width="0.9" stroke-opacity="0.16"/><rect x="460.72" y="1367.4" width="22.4" height="22.4" fill="#f0a19d" stroke="#000" stroke-width="0.9" stroke-opacity="0.16"/><rect x="490.44" y="1367.4" width="22.4" height="22.4" fill="#d83530" stroke="#000" stroke-width="0.9" stroke-opacity="0.16"/><rect x="520.16" y="1367.4" width="22.4" height="22.4" fill="#f5c67d" stroke="#000" stroke-width="0.9" stroke-opacity="0.16"/><rect x="549.88" y="1367.4" width="22.4" height="22.4" fill="#ee9333" stroke="#000" stroke-width="0.9" stroke-opacity="0.16"/><line x1="284.5" y1="1395" x2="587.2" y2="1395" stroke="#c9c9c8" stroke-width="1.4" /><text x="324.5" y="1427.5" font-size="26.67" fill="#1b1b1b" stroke="#1b1b1b" textLength="109.8" lengthAdjust="spacingAndGlyphs">Copy Color</text><text x="324.5" y="1474" font-size="26.67" fill="#bdbdbc" stroke="#bdbdbc" textLength="115.5" lengthAdjust="spacingAndGlyphs">Paste Color</text><text x="324.5" y="1520" font-size="26.67" fill="#1b1b1b" stroke="#1b1b1b" textLength="101.5" lengthAdjust="spacingAndGlyphs">Pick Color</text><text x="324.5" y="1566.5" font-size="26.67" fill="#1b1b1b" stroke="#1b1b1b" textLength="151.1" lengthAdjust="spacingAndGlyphs">Choose Color...</text></svg>
</body></html>
